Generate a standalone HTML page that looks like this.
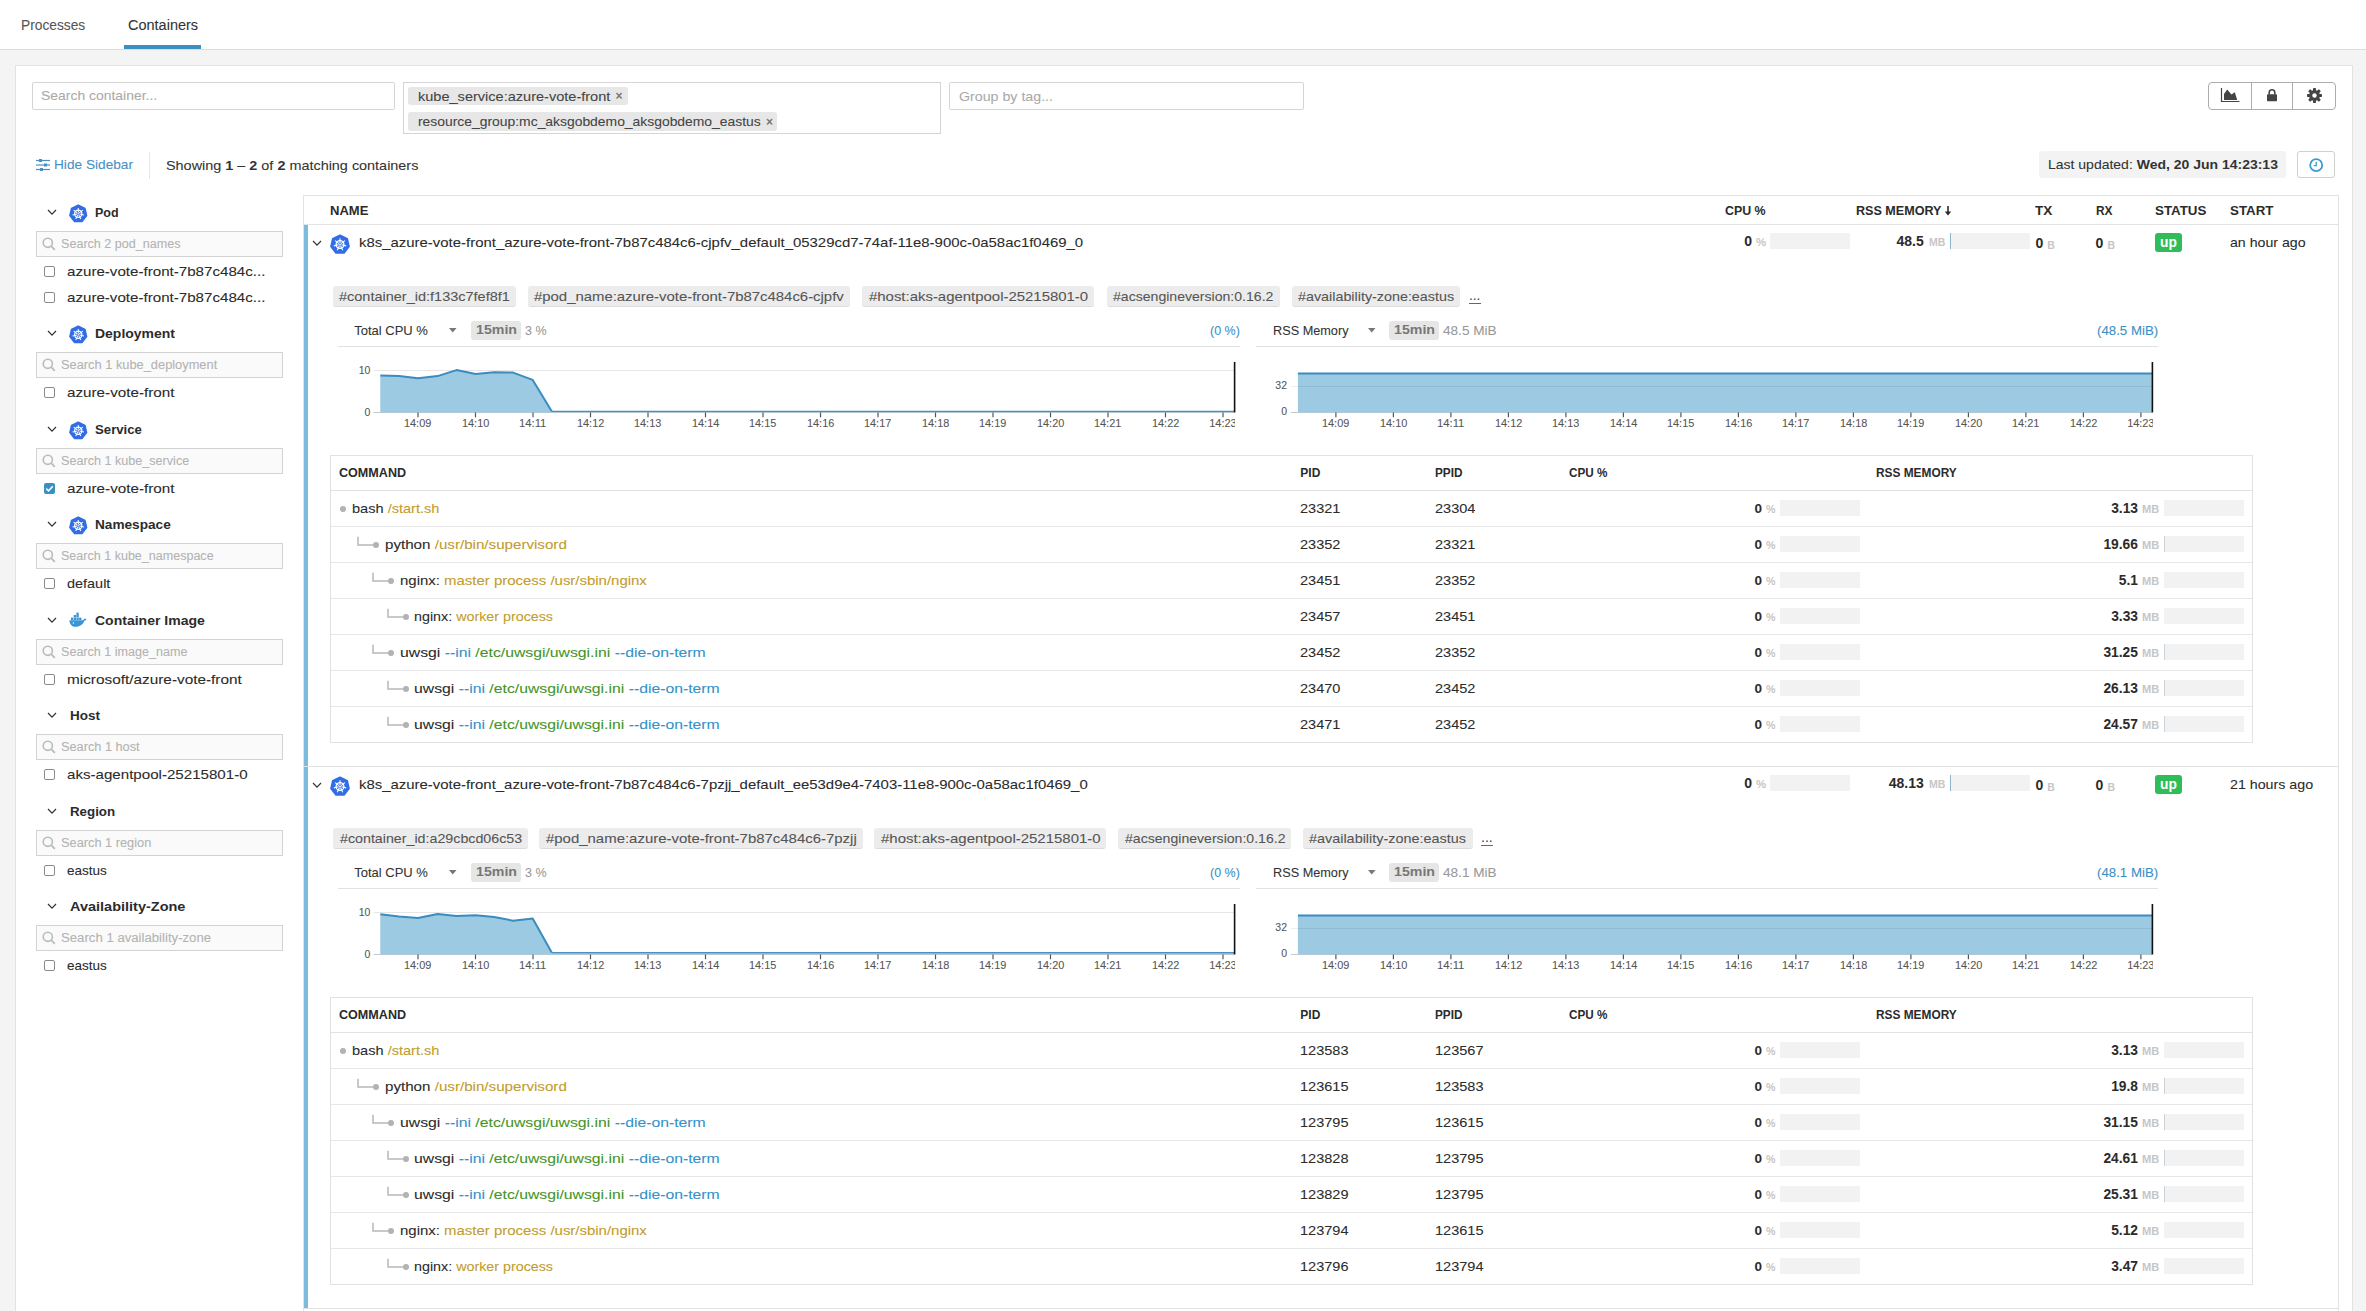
<!DOCTYPE html><html><head><meta charset="utf-8"><style>
html,body{margin:0;padding:0;}
body{width:2366px;height:1311px;overflow:hidden;position:relative;background:#f4f4f4;font-family:"Liberation Sans",sans-serif;}
.t{position:absolute;white-space:nowrap;line-height:1;-webkit-text-stroke:0.08px currentColor;}
.b{position:absolute;box-sizing:border-box;}
svg.b{overflow:visible}
</style></head><body>
<div class="b" style="left:0.00px;top:0.00px;width:2366.00px;height:49.00px;background:#fff"></div>
<div class="b" style="left:0.00px;top:49.00px;width:2366.00px;height:1.00px;background:#dcdcdc"></div>
<div class="t" style="left:20.60px;top:18.05px;font-size:14px;color:#555;transform:scaleX(0.9824);transform-origin:0 0;">Processes</div>
<div class="t" style="left:127.90px;top:18.05px;font-size:14px;color:#333;transform:scaleX(1.0355);transform-origin:0 0;">Containers</div>
<div class="b" style="left:124.00px;top:45.00px;width:77.00px;height:4.00px;background:#3c8fc1"></div>
<div class="b" style="left:15.00px;top:65.00px;width:2338.00px;height:1246.00px;background:#fff;border:1px solid #e3e3e3;border-bottom:none"></div>
<div class="b" style="left:32.00px;top:82.00px;width:363.00px;height:28.00px;border:1px solid #d5d5d5;border-radius:2px;background:#fff"></div>
<div class="t" style="left:41.10px;top:89.47px;font-size:13.5px;color:#aaa;transform:scaleX(1.0315);transform-origin:0 0;">Search container...</div>
<div class="b" style="left:403.00px;top:82.00px;width:538.00px;height:52.00px;border:1px solid #d5d5d5;background:#fff"></div>
<div class="b" style="left:408.00px;top:86.50px;width:220.00px;height:18.20px;background:#e7e7e7;border-radius:3px"></div>
<div class="t" style="left:418.30px;top:89.50px;font-size:13px;color:#444;transform:scaleX(1.1183);transform-origin:0 0;">kube_service:azure-vote-front</div>
<div class="t" style="left:615.60px;top:90.34px;font-size:12px;color:#777;font-weight:bold;-webkit-text-stroke:0;">×</div>
<div class="b" style="left:408.00px;top:112.30px;width:369.40px;height:18.30px;background:#e7e7e7;border-radius:3px"></div>
<div class="t" style="left:418.30px;top:115.40px;font-size:13px;color:#444;transform:scaleX(1.0681);transform-origin:0 0;">resource_group:mc_aksgobdemo_aksgobdemo_eastus</div>
<div class="t" style="left:766.00px;top:116.24px;font-size:12px;color:#777;font-weight:bold;-webkit-text-stroke:0;">×</div>
<div class="b" style="left:949.00px;top:82.00px;width:355.00px;height:28.00px;border:1px solid #d5d5d5;border-radius:2px;background:#fff"></div>
<div class="t" style="left:959.00px;top:89.87px;font-size:13.5px;color:#aaa;transform:scaleX(1.0526);transform-origin:0 0;">Group by tag...</div>
<div class="b" style="left:2208.00px;top:82.00px;width:128.00px;height:28.00px;border:1px solid #adadad;border-radius:4px;background:#fff"></div>
<div class="b" style="left:2250.50px;top:82.00px;width:1.00px;height:28.00px;background:#adadad"></div>
<div class="b" style="left:2292.30px;top:82.00px;width:1.00px;height:28.00px;background:#adadad"></div>
<svg class="b" style="left:2221px;top:88px" width="19" height="14" viewBox="0 0 19 14"><path d="M0.5 0 V13.5 H18.5" fill="none" stroke="#444" stroke-width="1.2"/><path d="M3 12 L3 6 L6.2 1.6 L10.5 6.4 L13.8 4.2 L16.2 12 Z" fill="#444"/></svg>
<svg class="b" style="left:2266.8px;top:88.6px" width="10" height="12.2" viewBox="0 0 10 12.2"><path d="M2.2 5.5 V3.6 A2.8 2.8 0 0 1 7.8 3.6 V5.5" fill="none" stroke="#444" stroke-width="1.6"/><rect x="0" y="5.3" width="10" height="6.9" rx="0.8" fill="#444"/></svg>
<svg class="b" style="left:2307px;top:88px" width="15" height="15" viewBox="-7.5 -7.5 15 15"><g fill="#444"><rect x="-1.45" y="-7.5" width="2.9" height="4" rx="0.6" transform="rotate(0)" /><rect x="-1.45" y="-7.5" width="2.9" height="4" rx="0.6" transform="rotate(45)" /><rect x="-1.45" y="-7.5" width="2.9" height="4" rx="0.6" transform="rotate(90)" /><rect x="-1.45" y="-7.5" width="2.9" height="4" rx="0.6" transform="rotate(135)" /><rect x="-1.45" y="-7.5" width="2.9" height="4" rx="0.6" transform="rotate(180)" /><rect x="-1.45" y="-7.5" width="2.9" height="4" rx="0.6" transform="rotate(225)" /><rect x="-1.45" y="-7.5" width="2.9" height="4" rx="0.6" transform="rotate(270)" /><rect x="-1.45" y="-7.5" width="2.9" height="4" rx="0.6" transform="rotate(315)" /><circle r="5.4"/></g><circle r="2.2" fill="#fff"/></svg>
<svg class="b" style="left:35.8px;top:159px" width="14" height="12" viewBox="0 0 14 12"><g stroke="#4a90c2" stroke-width="1.2"><line x1="0" y1="1.5" x2="14" y2="1.5"/><line x1="0" y1="6" x2="14" y2="6"/><line x1="0" y1="10.5" x2="14" y2="10.5"/></g><g fill="#4a90c2"><rect x="3" y="0" width="3" height="3"/><rect x="8" y="4.5" width="3" height="3"/><rect x="4" y="9" width="3" height="3"/></g></svg>
<div class="t" style="left:53.60px;top:158.27px;font-size:13.5px;color:#4a90c2;transform:scaleX(1.0122);transform-origin:0 0;">Hide Sidebar</div>
<div class="b" style="left:149.00px;top:152.40px;width:1.00px;height:26.60px;background:#e6e6e6"></div>
<div class="t" style="left:166.20px;top:158.60px;font-size:13px;transform:scaleX(1.1084);transform-origin:0 0;"><span style="color:#333;">Showing </span><span style="color:#333;font-weight:bold;-webkit-text-stroke:0;">1</span><span style="color:#333;"> – </span><span style="color:#333;font-weight:bold;-webkit-text-stroke:0;">2</span><span style="color:#333;"> of </span><span style="color:#333;font-weight:bold;-webkit-text-stroke:0;">2</span><span style="color:#333;"> matching containers</span></div>
<div class="b" style="left:2039.30px;top:151.00px;width:247.00px;height:27.00px;background:#f3f3f3;border-radius:3px"></div>
<div class="t" style="left:2048.00px;top:158.20px;font-size:13px;transform:scaleX(1.0761);transform-origin:0 0;"><span style="color:#333;">Last updated: </span><span style="color:#333;font-weight:bold;-webkit-text-stroke:0;">Wed, 20 Jun 14:23:13</span></div>
<div class="b" style="left:2297.30px;top:151.40px;width:38.00px;height:26.90px;border:1px solid #cfcfcf;border-radius:3px;background:#fff"></div>
<svg class="b" style="left:2309px;top:158px" width="15" height="15" viewBox="0 0 15 15"><circle cx="7.2" cy="7.2" r="6" fill="none" stroke="#3c9bd0" stroke-width="1.8"/><path d="M7.2 3.8 V7.6 H4.8" fill="none" stroke="#3c9bd0" stroke-width="1.3"/></svg>
<svg class="b" style="left:47px;top:208.8px" width="10" height="7" viewBox="0 0 10 7"><polyline points="1,1 5,5.2 9,1" fill="none" stroke="#333" stroke-width="1.2"/></svg>
<svg class="b" style="left:68.8px;top:204.1px" width="18.5" height="18.5" viewBox="0 0 20 20"><polygon points="10.00,1.20 17.27,4.70 19.07,12.57 14.04,18.88 5.96,18.88 0.93,12.57 2.73,4.70" fill="#326de6" stroke="#326de6" stroke-width="1.6" stroke-linejoin="round"/><g stroke="#fff" fill="none"><circle cx="10" cy="10.5" r="3.9" stroke-width="1.3"/><g stroke-width="1.1"><line x1="10.00" y1="9.10" x2="10.00" y2="4.20"/><line x1="11.09" y1="9.63" x2="14.93" y2="6.57"/><line x1="11.36" y1="10.81" x2="16.14" y2="11.90"/><line x1="10.61" y1="11.76" x2="12.73" y2="16.18"/><line x1="9.39" y1="11.76" x2="7.27" y2="16.18"/><line x1="8.64" y1="10.81" x2="3.86" y2="11.90"/><line x1="8.91" y1="9.63" x2="5.07" y2="6.57"/></g></g><circle cx="10" cy="10.5" r="0.9" fill="#fff"/></svg>
<div class="t" style="left:95.40px;top:206.00px;font-size:13px;color:#2b2b2b;font-weight:bold;-webkit-text-stroke:0;transform:scaleX(0.9613);transform-origin:0 0;">Pod</div>
<div class="b" style="left:36.00px;top:231.00px;width:247.00px;height:26.00px;border:1px solid #d3d3d3;background:#fafafa"></div>
<svg class="b" style="left:42px;top:237.2px" width="14" height="14" viewBox="0 0 14 14"><circle cx="5.8" cy="5.8" r="4.6" fill="none" stroke="#bbb" stroke-width="1.6"/><line x1="9.2" y1="9.2" x2="12.8" y2="12.8" stroke="#bbb" stroke-width="1.8"/></svg>
<div class="t" style="left:61.20px;top:238.04px;font-size:12px;color:#b3b3b3;transform:scaleX(1.0482);transform-origin:0 0;">Search 2 pod_names</div>
<div class="b" style="left:44.00px;top:265.60px;width:11.00px;height:11.00px;border:1px solid #8a8a8a;border-radius:2px;box-sizing:border-box;background:#fff"></div>
<div class="t" style="left:66.50px;top:265.20px;font-size:13px;color:#2b2b2b;transform:scaleX(1.1633);transform-origin:0 0;">azure-vote-front-7b87c484c...</div>
<div class="b" style="left:44.00px;top:291.60px;width:11.00px;height:11.00px;border:1px solid #8a8a8a;border-radius:2px;box-sizing:border-box;background:#fff"></div>
<div class="t" style="left:66.50px;top:291.20px;font-size:13px;color:#2b2b2b;transform:scaleX(1.1633);transform-origin:0 0;">azure-vote-front-7b87c484c...</div>
<svg class="b" style="left:47px;top:329.8px" width="10" height="7" viewBox="0 0 10 7"><polyline points="1,1 5,5.2 9,1" fill="none" stroke="#333" stroke-width="1.2"/></svg>
<svg class="b" style="left:68.8px;top:325.1px" width="18.5" height="18.5" viewBox="0 0 20 20"><polygon points="10.00,1.20 17.27,4.70 19.07,12.57 14.04,18.88 5.96,18.88 0.93,12.57 2.73,4.70" fill="#326de6" stroke="#326de6" stroke-width="1.6" stroke-linejoin="round"/><g stroke="#fff" fill="none"><circle cx="10" cy="10.5" r="3.9" stroke-width="1.3"/><g stroke-width="1.1"><line x1="10.00" y1="9.10" x2="10.00" y2="4.20"/><line x1="11.09" y1="9.63" x2="14.93" y2="6.57"/><line x1="11.36" y1="10.81" x2="16.14" y2="11.90"/><line x1="10.61" y1="11.76" x2="12.73" y2="16.18"/><line x1="9.39" y1="11.76" x2="7.27" y2="16.18"/><line x1="8.64" y1="10.81" x2="3.86" y2="11.90"/><line x1="8.91" y1="9.63" x2="5.07" y2="6.57"/></g></g><circle cx="10" cy="10.5" r="0.9" fill="#fff"/></svg>
<div class="t" style="left:95.40px;top:327.00px;font-size:13px;color:#2b2b2b;font-weight:bold;-webkit-text-stroke:0;transform:scaleX(1.0753);transform-origin:0 0;">Deployment</div>
<div class="b" style="left:36.00px;top:352.00px;width:247.00px;height:26.00px;border:1px solid #d3d3d3;background:#fafafa"></div>
<svg class="b" style="left:42px;top:358.2px" width="14" height="14" viewBox="0 0 14 14"><circle cx="5.8" cy="5.8" r="4.6" fill="none" stroke="#bbb" stroke-width="1.6"/><line x1="9.2" y1="9.2" x2="12.8" y2="12.8" stroke="#bbb" stroke-width="1.8"/></svg>
<div class="t" style="left:61.20px;top:359.04px;font-size:12px;color:#b3b3b3;transform:scaleX(1.0691);transform-origin:0 0;">Search 1 kube_deployment</div>
<div class="b" style="left:44.00px;top:386.60px;width:11.00px;height:11.00px;border:1px solid #8a8a8a;border-radius:2px;box-sizing:border-box;background:#fff"></div>
<div class="t" style="left:66.50px;top:386.20px;font-size:13px;color:#2b2b2b;transform:scaleX(1.1706);transform-origin:0 0;">azure-vote-front</div>
<svg class="b" style="left:47px;top:425.8px" width="10" height="7" viewBox="0 0 10 7"><polyline points="1,1 5,5.2 9,1" fill="none" stroke="#333" stroke-width="1.2"/></svg>
<svg class="b" style="left:68.8px;top:421.1px" width="18.5" height="18.5" viewBox="0 0 20 20"><polygon points="10.00,1.20 17.27,4.70 19.07,12.57 14.04,18.88 5.96,18.88 0.93,12.57 2.73,4.70" fill="#326de6" stroke="#326de6" stroke-width="1.6" stroke-linejoin="round"/><g stroke="#fff" fill="none"><circle cx="10" cy="10.5" r="3.9" stroke-width="1.3"/><g stroke-width="1.1"><line x1="10.00" y1="9.10" x2="10.00" y2="4.20"/><line x1="11.09" y1="9.63" x2="14.93" y2="6.57"/><line x1="11.36" y1="10.81" x2="16.14" y2="11.90"/><line x1="10.61" y1="11.76" x2="12.73" y2="16.18"/><line x1="9.39" y1="11.76" x2="7.27" y2="16.18"/><line x1="8.64" y1="10.81" x2="3.86" y2="11.90"/><line x1="8.91" y1="9.63" x2="5.07" y2="6.57"/></g></g><circle cx="10" cy="10.5" r="0.9" fill="#fff"/></svg>
<div class="t" style="left:95.40px;top:423.00px;font-size:13px;color:#2b2b2b;font-weight:bold;-webkit-text-stroke:0;transform:scaleX(1.0141);transform-origin:0 0;">Service</div>
<div class="b" style="left:36.00px;top:448.00px;width:247.00px;height:26.00px;border:1px solid #d3d3d3;background:#fafafa"></div>
<svg class="b" style="left:42px;top:454.2px" width="14" height="14" viewBox="0 0 14 14"><circle cx="5.8" cy="5.8" r="4.6" fill="none" stroke="#bbb" stroke-width="1.6"/><line x1="9.2" y1="9.2" x2="12.8" y2="12.8" stroke="#bbb" stroke-width="1.8"/></svg>
<div class="t" style="left:61.20px;top:455.04px;font-size:12px;color:#b3b3b3;transform:scaleX(1.0504);transform-origin:0 0;">Search 1 kube_service</div>
<svg class="b" style="left:44px;top:482.6px" width="11" height="11" viewBox="0 0 11 11"><rect x="0" y="0" width="11" height="11" rx="2" fill="#3c8fc1"/><polyline points="2.3,5.6 4.5,7.8 8.8,3.2" fill="none" stroke="#fff" stroke-width="1.6"/></svg>
<div class="t" style="left:66.50px;top:482.20px;font-size:13px;color:#2b2b2b;transform:scaleX(1.1706);transform-origin:0 0;">azure-vote-front</div>
<svg class="b" style="left:47px;top:520.8px" width="10" height="7" viewBox="0 0 10 7"><polyline points="1,1 5,5.2 9,1" fill="none" stroke="#333" stroke-width="1.2"/></svg>
<svg class="b" style="left:68.8px;top:516.1px" width="18.5" height="18.5" viewBox="0 0 20 20"><polygon points="10.00,1.20 17.27,4.70 19.07,12.57 14.04,18.88 5.96,18.88 0.93,12.57 2.73,4.70" fill="#326de6" stroke="#326de6" stroke-width="1.6" stroke-linejoin="round"/><g stroke="#fff" fill="none"><circle cx="10" cy="10.5" r="3.9" stroke-width="1.3"/><g stroke-width="1.1"><line x1="10.00" y1="9.10" x2="10.00" y2="4.20"/><line x1="11.09" y1="9.63" x2="14.93" y2="6.57"/><line x1="11.36" y1="10.81" x2="16.14" y2="11.90"/><line x1="10.61" y1="11.76" x2="12.73" y2="16.18"/><line x1="9.39" y1="11.76" x2="7.27" y2="16.18"/><line x1="8.64" y1="10.81" x2="3.86" y2="11.90"/><line x1="8.91" y1="9.63" x2="5.07" y2="6.57"/></g></g><circle cx="10" cy="10.5" r="0.9" fill="#fff"/></svg>
<div class="t" style="left:95.40px;top:518.00px;font-size:13px;color:#2b2b2b;font-weight:bold;-webkit-text-stroke:0;transform:scaleX(1.0478);transform-origin:0 0;">Namespace</div>
<div class="b" style="left:36.00px;top:543.00px;width:247.00px;height:26.00px;border:1px solid #d3d3d3;background:#fafafa"></div>
<svg class="b" style="left:42px;top:549.2px" width="14" height="14" viewBox="0 0 14 14"><circle cx="5.8" cy="5.8" r="4.6" fill="none" stroke="#bbb" stroke-width="1.6"/><line x1="9.2" y1="9.2" x2="12.8" y2="12.8" stroke="#bbb" stroke-width="1.8"/></svg>
<div class="t" style="left:61.20px;top:550.04px;font-size:12px;color:#b3b3b3;transform:scaleX(1.0445);transform-origin:0 0;">Search 1 kube_namespace</div>
<div class="b" style="left:44.00px;top:577.60px;width:11.00px;height:11.00px;border:1px solid #8a8a8a;border-radius:2px;box-sizing:border-box;background:#fff"></div>
<div class="t" style="left:66.50px;top:577.20px;font-size:13px;color:#2b2b2b;transform:scaleX(1.1114);transform-origin:0 0;">default</div>
<svg class="b" style="left:47px;top:616.8px" width="10" height="7" viewBox="0 0 10 7"><polyline points="1,1 5,5.2 9,1" fill="none" stroke="#333" stroke-width="1.2"/></svg>
<svg class="b" style="left:69px;top:614.4px" width="18" height="13" viewBox="0 0 18 13"><path d="M0.4 6.2 H14.2 C14.6 5.2 15.8 4.6 17.4 5.0 C17.0 6.0 16.4 6.6 15.4 6.8 C14.2 10.4 11.0 12.8 6.6 12.8 C2.8 12.8 0.6 10.2 0.4 6.2 Z" fill="#3a94d8"/><g fill="#3a94d8"><rect x="2.0" y="3.6" width="2.3" height="2.4"/><rect x="4.7" y="3.6" width="2.3" height="2.4"/><rect x="7.4" y="3.6" width="2.3" height="2.4"/><rect x="10.1" y="3.6" width="2.3" height="2.4"/><rect x="4.7" y="1.0" width="2.3" height="2.4"/><rect x="7.4" y="1.0" width="2.3" height="2.4"/><rect x="7.4" y="-1.4" width="2.3" height="2.4"/></g><circle cx="4.4" cy="9.0" r="0.7" fill="#fff"/></svg>
<div class="t" style="left:95.40px;top:614.00px;font-size:13px;color:#2b2b2b;font-weight:bold;-webkit-text-stroke:0;transform:scaleX(1.0781);transform-origin:0 0;">Container Image</div>
<div class="b" style="left:36.00px;top:639.00px;width:247.00px;height:26.00px;border:1px solid #d3d3d3;background:#fafafa"></div>
<svg class="b" style="left:42px;top:645.2px" width="14" height="14" viewBox="0 0 14 14"><circle cx="5.8" cy="5.8" r="4.6" fill="none" stroke="#bbb" stroke-width="1.6"/><line x1="9.2" y1="9.2" x2="12.8" y2="12.8" stroke="#bbb" stroke-width="1.8"/></svg>
<div class="t" style="left:61.20px;top:646.04px;font-size:12px;color:#b3b3b3;transform:scaleX(1.0476);transform-origin:0 0;">Search 1 image_name</div>
<div class="b" style="left:44.00px;top:673.60px;width:11.00px;height:11.00px;border:1px solid #8a8a8a;border-radius:2px;box-sizing:border-box;background:#fff"></div>
<div class="t" style="left:66.50px;top:673.20px;font-size:13px;color:#2b2b2b;transform:scaleX(1.1803);transform-origin:0 0;">microsoft/azure-vote-front</div>
<svg class="b" style="left:47px;top:711.8px" width="10" height="7" viewBox="0 0 10 7"><polyline points="1,1 5,5.2 9,1" fill="none" stroke="#333" stroke-width="1.2"/></svg>
<div class="t" style="left:69.60px;top:709.00px;font-size:13px;color:#2b2b2b;font-weight:bold;-webkit-text-stroke:0;transform:scaleX(1.0381);transform-origin:0 0;">Host</div>
<div class="b" style="left:36.00px;top:734.00px;width:247.00px;height:26.00px;border:1px solid #d3d3d3;background:#fafafa"></div>
<svg class="b" style="left:42px;top:740.2px" width="14" height="14" viewBox="0 0 14 14"><circle cx="5.8" cy="5.8" r="4.6" fill="none" stroke="#bbb" stroke-width="1.6"/><line x1="9.2" y1="9.2" x2="12.8" y2="12.8" stroke="#bbb" stroke-width="1.8"/></svg>
<div class="t" style="left:61.20px;top:741.04px;font-size:12px;color:#b3b3b3;transform:scaleX(1.0614);transform-origin:0 0;">Search 1 host</div>
<div class="b" style="left:44.00px;top:768.60px;width:11.00px;height:11.00px;border:1px solid #8a8a8a;border-radius:2px;box-sizing:border-box;background:#fff"></div>
<div class="t" style="left:66.50px;top:768.20px;font-size:13px;color:#2b2b2b;transform:scaleX(1.1622);transform-origin:0 0;">aks-agentpool-25215801-0</div>
<svg class="b" style="left:47px;top:807.8px" width="10" height="7" viewBox="0 0 10 7"><polyline points="1,1 5,5.2 9,1" fill="none" stroke="#333" stroke-width="1.2"/></svg>
<div class="t" style="left:69.60px;top:805.00px;font-size:13px;color:#2b2b2b;font-weight:bold;-webkit-text-stroke:0;transform:scaleX(1.0238);transform-origin:0 0;">Region</div>
<div class="b" style="left:36.00px;top:830.00px;width:247.00px;height:26.00px;border:1px solid #d3d3d3;background:#fafafa"></div>
<svg class="b" style="left:42px;top:836.2px" width="14" height="14" viewBox="0 0 14 14"><circle cx="5.8" cy="5.8" r="4.6" fill="none" stroke="#bbb" stroke-width="1.6"/><line x1="9.2" y1="9.2" x2="12.8" y2="12.8" stroke="#bbb" stroke-width="1.8"/></svg>
<div class="t" style="left:61.20px;top:837.04px;font-size:12px;color:#b3b3b3;transform:scaleX(1.0655);transform-origin:0 0;">Search 1 region</div>
<div class="b" style="left:44.00px;top:864.60px;width:11.00px;height:11.00px;border:1px solid #8a8a8a;border-radius:2px;box-sizing:border-box;background:#fff"></div>
<div class="t" style="left:66.50px;top:864.20px;font-size:13px;color:#2b2b2b;transform:scaleX(1.0392);transform-origin:0 0;">eastus</div>
<svg class="b" style="left:47px;top:902.8px" width="10" height="7" viewBox="0 0 10 7"><polyline points="1,1 5,5.2 9,1" fill="none" stroke="#333" stroke-width="1.2"/></svg>
<div class="t" style="left:69.60px;top:900.00px;font-size:13px;color:#2b2b2b;font-weight:bold;-webkit-text-stroke:0;transform:scaleX(1.1144);transform-origin:0 0;">Availability-Zone</div>
<div class="b" style="left:36.00px;top:925.00px;width:247.00px;height:26.00px;border:1px solid #d3d3d3;background:#fafafa"></div>
<svg class="b" style="left:42px;top:931.2px" width="14" height="14" viewBox="0 0 14 14"><circle cx="5.8" cy="5.8" r="4.6" fill="none" stroke="#bbb" stroke-width="1.6"/><line x1="9.2" y1="9.2" x2="12.8" y2="12.8" stroke="#bbb" stroke-width="1.8"/></svg>
<div class="t" style="left:61.20px;top:932.04px;font-size:12px;color:#b3b3b3;transform:scaleX(1.0976);transform-origin:0 0;">Search 1 availability-zone</div>
<div class="b" style="left:44.00px;top:959.60px;width:11.00px;height:11.00px;border:1px solid #8a8a8a;border-radius:2px;box-sizing:border-box;background:#fff"></div>
<div class="t" style="left:66.50px;top:959.20px;font-size:13px;color:#2b2b2b;transform:scaleX(1.0392);transform-origin:0 0;">eastus</div>
<div class="b" style="left:303.00px;top:195.00px;width:2036.00px;height:1116.00px;border:1px solid #e3e3e3;border-bottom:none;background:#fff"></div>
<div class="b" style="left:304.00px;top:224.00px;width:2034.00px;height:1.00px;background:#e3e3e3"></div>
<div class="t" style="left:330.40px;top:204.74px;font-size:12px;color:#2b2b2b;font-weight:bold;-webkit-text-stroke:0;transform:scaleX(1.0863);transform-origin:0 0;">NAME</div>
<div class="t" style="left:1725.40px;top:204.74px;font-size:12px;color:#2b2b2b;font-weight:bold;-webkit-text-stroke:0;transform:scaleX(1.0318);transform-origin:0 0;">CPU %</div>
<div class="t" style="left:1855.70px;top:204.74px;font-size:12px;color:#2b2b2b;font-weight:bold;-webkit-text-stroke:0;transform:scaleX(1.0484);transform-origin:0 0;">RSS MEMORY</div>
<svg class="b" style="left:1943.5px;top:205.5px" width="8" height="10" viewBox="0 0 8 10"><path d="M4 0 V8.5" stroke="#2b2b2b" stroke-width="1.6"/><path d="M0.8 5.6 L4 9.6 L7.2 5.6" fill="#2b2b2b"/></svg>
<div class="t" style="left:2035.20px;top:204.74px;font-size:12px;color:#2b2b2b;font-weight:bold;-webkit-text-stroke:0;transform:scaleX(1.1270);transform-origin:0 0;">TX</div>
<div class="t" style="left:2095.60px;top:204.74px;font-size:12px;color:#2b2b2b;font-weight:bold;-webkit-text-stroke:0;transform:scaleX(0.9910);transform-origin:0 0;">RX</div>
<div class="t" style="left:2155.20px;top:204.74px;font-size:12px;color:#2b2b2b;font-weight:bold;-webkit-text-stroke:0;transform:scaleX(1.1104);transform-origin:0 0;">STATUS</div>
<div class="t" style="left:2230.30px;top:204.74px;font-size:12px;color:#2b2b2b;font-weight:bold;-webkit-text-stroke:0;transform:scaleX(1.1100);transform-origin:0 0;">START</div>
<div class="b" style="left:304.00px;top:225.00px;width:4.00px;height:541.30px;background:#7dbbdd"></div>
<svg class="b" style="left:311.5px;top:239.5px" width="10" height="7" viewBox="0 0 10 7"><polyline points="1,1 5,5.2 9,1" fill="none" stroke="#333" stroke-width="1.2"/></svg>
<svg class="b" style="left:330px;top:234px" width="20" height="20" viewBox="0 0 20 20"><polygon points="10.00,1.20 17.27,4.70 19.07,12.57 14.04,18.88 5.96,18.88 0.93,12.57 2.73,4.70" fill="#326de6" stroke="#326de6" stroke-width="1.6" stroke-linejoin="round"/><g stroke="#fff" fill="none"><circle cx="10" cy="10.5" r="3.9" stroke-width="1.3"/><g stroke-width="1.1"><line x1="10.00" y1="9.10" x2="10.00" y2="4.20"/><line x1="11.09" y1="9.63" x2="14.93" y2="6.57"/><line x1="11.36" y1="10.81" x2="16.14" y2="11.90"/><line x1="10.61" y1="11.76" x2="12.73" y2="16.18"/><line x1="9.39" y1="11.76" x2="7.27" y2="16.18"/><line x1="8.64" y1="10.81" x2="3.86" y2="11.90"/><line x1="8.91" y1="9.63" x2="5.07" y2="6.57"/></g></g><circle cx="10" cy="10.5" r="0.9" fill="#fff"/></svg>
<div class="t" style="left:358.50px;top:236.47px;font-size:13.5px;color:#2b2b2b;transform:scaleX(1.1057);transform-origin:0 0;">k8s_azure-vote-front_azure-vote-front-7b87c484c6-cjpfv_default_05329cd7-74af-11e8-900c-0a58ac1f0469_0</div>
<div class="t" style="left:1744.20px;top:233.85px;font-size:14px;color:#2b2b2b;font-weight:bold;-webkit-text-stroke:0;">0</div>
<div class="t" style="left:1755.80px;top:236.81px;font-size:10.5px;color:#c6c6c6;font-weight:bold;-webkit-text-stroke:0;transform:scaleX(1.0909);transform-origin:0 0;">%</div>
<div class="b" style="left:1770.00px;top:233.00px;width:80.00px;height:16.00px;background:#f2f2f2"></div>
<div class="t" style="left:1896.55px;top:233.85px;font-size:14px;color:#2b2b2b;font-weight:bold;-webkit-text-stroke:0;">48.5</div>
<div class="t" style="left:1928.90px;top:236.81px;font-size:10.5px;color:#c6c6c6;font-weight:bold;-webkit-text-stroke:0;transform:scaleX(1.0031);transform-origin:0 0;">MB</div>
<div class="b" style="left:1950.20px;top:233.00px;width:79.80px;height:16.00px;background:#f2f2f2;border-left:1.5px solid #8fb4cf"></div>
<div class="t" style="left:2035.40px;top:236.35px;font-size:14px;color:#2b2b2b;font-weight:bold;-webkit-text-stroke:0;">0</div>
<div class="t" style="left:2047.20px;top:239.71px;font-size:10.5px;color:#c6c6c6;font-weight:bold;-webkit-text-stroke:0;">B</div>
<div class="t" style="left:2095.60px;top:236.35px;font-size:14px;color:#2b2b2b;font-weight:bold;-webkit-text-stroke:0;">0</div>
<div class="t" style="left:2107.40px;top:239.71px;font-size:10.5px;color:#c6c6c6;font-weight:bold;-webkit-text-stroke:0;">B</div>
<div class="b" style="left:2155.00px;top:233.00px;width:27.00px;height:19.00px;background:#2fbd5a;border-radius:3px"></div>
<div class="t" style="left:2160.20px;top:235.15px;font-size:14px;color:#fff;font-weight:bold;-webkit-text-stroke:0;transform:scaleX(0.9825);transform-origin:0 0;">up</div>
<div class="t" style="left:2230.40px;top:235.70px;font-size:13px;color:#2b2b2b;transform:scaleX(1.0879);transform-origin:0 0;">an hour ago</div>
<div class="b" style="left:332.80px;top:286.00px;width:183.40px;height:21.00px;background:#ececec;border-radius:3px;border-bottom:1px solid #dcdcdc"></div>
<div class="t" style="left:339.10px;top:289.70px;font-size:13px;color:#555;transform:scaleX(1.1149);transform-origin:0 0;">#container_id:f133c7fef8f1</div>
<div class="b" style="left:528.00px;top:286.00px;width:322.30px;height:21.00px;background:#ececec;border-radius:3px;border-bottom:1px solid #dcdcdc"></div>
<div class="t" style="left:534.30px;top:289.70px;font-size:13px;color:#555;transform:scaleX(1.1460);transform-origin:0 0;">#pod_name:azure-vote-front-7b87c484c6-cjpfv</div>
<div class="b" style="left:862.30px;top:286.00px;width:231.70px;height:21.00px;background:#ececec;border-radius:3px;border-bottom:1px solid #dcdcdc"></div>
<div class="t" style="left:868.60px;top:289.70px;font-size:13px;color:#555;transform:scaleX(1.1483);transform-origin:0 0;">#host:aks-agentpool-25215801-0</div>
<div class="b" style="left:1106.70px;top:286.00px;width:173.00px;height:21.00px;background:#ececec;border-radius:3px;border-bottom:1px solid #dcdcdc"></div>
<div class="t" style="left:1113.00px;top:289.70px;font-size:13px;color:#555;transform:scaleX(1.0827);transform-origin:0 0;">#acsengineversion:0.16.2</div>
<div class="b" style="left:1291.80px;top:286.00px;width:168.70px;height:21.00px;background:#ececec;border-radius:3px;border-bottom:1px solid #dcdcdc"></div>
<div class="t" style="left:1298.10px;top:289.70px;font-size:13px;color:#555;transform:scaleX(1.1020);transform-origin:0 0;">#availability-zone:eastus</div>
<div class="t" style="left:1469.40px;top:289.30px;font-size:13px;color:#444;transform:scaleX(1.0507);transform-origin:0 0;">...</div>
<div class="b" style="left:1469.40px;top:302.50px;width:11.40px;height:1.00px;background:#666"></div>
<div class="t" style="left:354.20px;top:323.50px;font-size:13px;color:#333;">Total CPU %</div>
<svg class="b" style="left:449.4px;top:328.4px" width="7.5" height="4.5" viewBox="0 0 7.5 4.5"><polygon points="0,0 7.5,0 3.75,4.5" fill="#777"/></svg>
<div class="b" style="left:471.00px;top:321.20px;width:49.70px;height:18.70px;background:#e6e6e6;border-radius:3px"></div>
<div class="t" style="left:475.50px;top:324.44px;font-size:12px;color:#777;font-weight:bold;-webkit-text-stroke:0;transform:scaleX(1.1816);transform-origin:0 0;">15min</div>
<div class="t" style="left:525.00px;top:323.60px;font-size:13px;color:#999;transform:scaleX(0.9598);transform-origin:0 0;">3 %</div>
<div class="t" style="left:1210.40px;top:323.60px;font-size:13px;color:#3a90c4;transform:scaleX(0.9597);transform-origin:0 0;">(0 %)</div>
<div class="b" style="left:338.00px;top:346.00px;width:902.20px;height:1.00px;background:#e2e2e2"></div>
<div class="t" style="left:1272.50px;top:323.50px;font-size:13px;color:#333;transform:scaleX(0.9767);transform-origin:0 0;">RSS Memory</div>
<svg class="b" style="left:1367.6px;top:328.4px" width="7.5" height="4.5" viewBox="0 0 7.5 4.5"><polygon points="0,0 7.5,0 3.75,4.5" fill="#777"/></svg>
<div class="b" style="left:1389.10px;top:321.20px;width:49.70px;height:18.70px;background:#e6e6e6;border-radius:3px"></div>
<div class="t" style="left:1393.60px;top:324.44px;font-size:12px;color:#777;font-weight:bold;-webkit-text-stroke:0;transform:scaleX(1.1816);transform-origin:0 0;">15min</div>
<div class="t" style="left:1443.10px;top:323.60px;font-size:13px;color:#999;transform:scaleX(1.0448);transform-origin:0 0;">48.5 MiB</div>
<div class="t" style="left:2096.60px;top:323.60px;font-size:13px;color:#3a90c4;transform:scaleX(1.0209);transform-origin:0 0;">(48.5 MiB)</div>
<div class="b" style="left:1256.00px;top:346.00px;width:901.80px;height:1.00px;background:#e2e2e2"></div>
<svg class="b" style="left:330px;top:355px" width="1850" height="80" viewBox="330 355 1850 80"><line x1="373.6" y1="370.5" x2="1234" y2="370.5" stroke="#e6e6e6" stroke-width="1"/><line x1="373.6" y1="412.5" x2="1234" y2="412.5" stroke="#c8c8c8" stroke-width="1"/><polygon points="380.3,412.5 380.3,375.4 399.0,376.0 418.0,378.3 437.6,376.1 456.4,370.1 475.7,373.9 494.1,372.3 513.1,372.6 532.7,379.9 551.7,411.3 1234.0,411.3 1234,412.5" fill="#9ccae2"/><polyline points="380.3,375.4 399.0,376.0 418.0,378.3 437.6,376.1 456.4,370.1 475.7,373.9 494.1,372.3 513.1,372.6 532.7,379.9 551.7,411.3" fill="none" stroke="#3a8cbf" stroke-width="2" stroke-linejoin="round"/><line x1="551.7" y1="411.3" x2="1234" y2="411.3" stroke="#4a90bd" stroke-width="1.3"/><line x1="1234.6" y1="362" x2="1234.6" y2="412.5" stroke="#111" stroke-width="1.6"/><line x1="1290.9" y1="412.5" x2="2152" y2="412.5" stroke="#c8c8c8" stroke-width="1"/><rect x="1297.9" y="373.4" width="854.0999999999999" height="39.10000000000002" fill="#9ccae2"/><line x1="1290.9" y1="386.5" x2="2152" y2="386.5" stroke="rgba(0,0,0,0.07)" stroke-width="1"/><line x1="1297.9" y1="373.6" x2="2152" y2="373.6" stroke="#3a8cbf" stroke-width="2"/><line x1="2152.4" y1="362" x2="2152.4" y2="412.5" stroke="#111" stroke-width="1.6"/><line x1="418.0" y1="412.5" x2="418.0" y2="417.3" stroke="#555" stroke-width="1.2"/><line x1="1335.9" y1="412.5" x2="1335.9" y2="417.3" stroke="#555" stroke-width="1.2"/><line x1="475.5" y1="412.5" x2="475.5" y2="417.3" stroke="#555" stroke-width="1.2"/><line x1="1393.4" y1="412.5" x2="1393.4" y2="417.3" stroke="#555" stroke-width="1.2"/><line x1="533.0" y1="412.5" x2="533.0" y2="417.3" stroke="#555" stroke-width="1.2"/><line x1="1450.9" y1="412.5" x2="1450.9" y2="417.3" stroke="#555" stroke-width="1.2"/><line x1="590.5" y1="412.5" x2="590.5" y2="417.3" stroke="#555" stroke-width="1.2"/><line x1="1508.4" y1="412.5" x2="1508.4" y2="417.3" stroke="#555" stroke-width="1.2"/><line x1="648.0" y1="412.5" x2="648.0" y2="417.3" stroke="#555" stroke-width="1.2"/><line x1="1565.9" y1="412.5" x2="1565.9" y2="417.3" stroke="#555" stroke-width="1.2"/><line x1="705.5" y1="412.5" x2="705.5" y2="417.3" stroke="#555" stroke-width="1.2"/><line x1="1623.4" y1="412.5" x2="1623.4" y2="417.3" stroke="#555" stroke-width="1.2"/><line x1="763.0" y1="412.5" x2="763.0" y2="417.3" stroke="#555" stroke-width="1.2"/><line x1="1680.9" y1="412.5" x2="1680.9" y2="417.3" stroke="#555" stroke-width="1.2"/><line x1="820.5" y1="412.5" x2="820.5" y2="417.3" stroke="#555" stroke-width="1.2"/><line x1="1738.4" y1="412.5" x2="1738.4" y2="417.3" stroke="#555" stroke-width="1.2"/><line x1="878.0" y1="412.5" x2="878.0" y2="417.3" stroke="#555" stroke-width="1.2"/><line x1="1795.9" y1="412.5" x2="1795.9" y2="417.3" stroke="#555" stroke-width="1.2"/><line x1="935.5" y1="412.5" x2="935.5" y2="417.3" stroke="#555" stroke-width="1.2"/><line x1="1853.4" y1="412.5" x2="1853.4" y2="417.3" stroke="#555" stroke-width="1.2"/><line x1="993.0" y1="412.5" x2="993.0" y2="417.3" stroke="#555" stroke-width="1.2"/><line x1="1910.9" y1="412.5" x2="1910.9" y2="417.3" stroke="#555" stroke-width="1.2"/><line x1="1050.5" y1="412.5" x2="1050.5" y2="417.3" stroke="#555" stroke-width="1.2"/><line x1="1968.4" y1="412.5" x2="1968.4" y2="417.3" stroke="#555" stroke-width="1.2"/><line x1="1108.0" y1="412.5" x2="1108.0" y2="417.3" stroke="#555" stroke-width="1.2"/><line x1="2025.9" y1="412.5" x2="2025.9" y2="417.3" stroke="#555" stroke-width="1.2"/><line x1="1165.5" y1="412.5" x2="1165.5" y2="417.3" stroke="#555" stroke-width="1.2"/><line x1="2083.4" y1="412.5" x2="2083.4" y2="417.3" stroke="#555" stroke-width="1.2"/><line x1="1223.0" y1="412.5" x2="1223.0" y2="417.3" stroke="#555" stroke-width="1.2"/><line x1="2140.9" y1="412.5" x2="2140.9" y2="417.3" stroke="#555" stroke-width="1.2"/></svg>
<div class="t" style="left:404.35px;top:417.59px;font-size:11px;color:#555;transform:scaleX(0.9909);transform-origin:0 0;">14:09</div>
<div class="t" style="left:1322.25px;top:417.59px;font-size:11px;color:#555;transform:scaleX(0.9909);transform-origin:0 0;">14:09</div>
<div class="t" style="left:461.85px;top:417.59px;font-size:11px;color:#555;transform:scaleX(0.9909);transform-origin:0 0;">14:10</div>
<div class="t" style="left:1379.75px;top:417.59px;font-size:11px;color:#555;transform:scaleX(0.9909);transform-origin:0 0;">14:10</div>
<div class="t" style="left:519.35px;top:417.59px;font-size:11px;color:#555;transform:scaleX(1.0225);transform-origin:0 0;">14:11</div>
<div class="t" style="left:1437.25px;top:417.59px;font-size:11px;color:#555;transform:scaleX(1.0225);transform-origin:0 0;">14:11</div>
<div class="t" style="left:576.85px;top:417.59px;font-size:11px;color:#555;transform:scaleX(0.9909);transform-origin:0 0;">14:12</div>
<div class="t" style="left:1494.75px;top:417.59px;font-size:11px;color:#555;transform:scaleX(0.9909);transform-origin:0 0;">14:12</div>
<div class="t" style="left:634.35px;top:417.59px;font-size:11px;color:#555;transform:scaleX(0.9909);transform-origin:0 0;">14:13</div>
<div class="t" style="left:1552.25px;top:417.59px;font-size:11px;color:#555;transform:scaleX(0.9909);transform-origin:0 0;">14:13</div>
<div class="t" style="left:691.85px;top:417.59px;font-size:11px;color:#555;transform:scaleX(0.9909);transform-origin:0 0;">14:14</div>
<div class="t" style="left:1609.75px;top:417.59px;font-size:11px;color:#555;transform:scaleX(0.9909);transform-origin:0 0;">14:14</div>
<div class="t" style="left:749.35px;top:417.59px;font-size:11px;color:#555;transform:scaleX(0.9909);transform-origin:0 0;">14:15</div>
<div class="t" style="left:1667.25px;top:417.59px;font-size:11px;color:#555;transform:scaleX(0.9909);transform-origin:0 0;">14:15</div>
<div class="t" style="left:806.85px;top:417.59px;font-size:11px;color:#555;transform:scaleX(0.9909);transform-origin:0 0;">14:16</div>
<div class="t" style="left:1724.75px;top:417.59px;font-size:11px;color:#555;transform:scaleX(0.9909);transform-origin:0 0;">14:16</div>
<div class="t" style="left:864.35px;top:417.59px;font-size:11px;color:#555;transform:scaleX(0.9909);transform-origin:0 0;">14:17</div>
<div class="t" style="left:1782.25px;top:417.59px;font-size:11px;color:#555;transform:scaleX(0.9909);transform-origin:0 0;">14:17</div>
<div class="t" style="left:921.85px;top:417.59px;font-size:11px;color:#555;transform:scaleX(0.9909);transform-origin:0 0;">14:18</div>
<div class="t" style="left:1839.75px;top:417.59px;font-size:11px;color:#555;transform:scaleX(0.9909);transform-origin:0 0;">14:18</div>
<div class="t" style="left:979.35px;top:417.59px;font-size:11px;color:#555;transform:scaleX(0.9909);transform-origin:0 0;">14:19</div>
<div class="t" style="left:1897.25px;top:417.59px;font-size:11px;color:#555;transform:scaleX(0.9909);transform-origin:0 0;">14:19</div>
<div class="t" style="left:1036.85px;top:417.59px;font-size:11px;color:#555;transform:scaleX(0.9909);transform-origin:0 0;">14:20</div>
<div class="t" style="left:1954.75px;top:417.59px;font-size:11px;color:#555;transform:scaleX(0.9909);transform-origin:0 0;">14:20</div>
<div class="t" style="left:1094.35px;top:417.59px;font-size:11px;color:#555;transform:scaleX(0.9909);transform-origin:0 0;">14:21</div>
<div class="t" style="left:2012.25px;top:417.59px;font-size:11px;color:#555;transform:scaleX(0.9909);transform-origin:0 0;">14:21</div>
<div class="t" style="left:1151.85px;top:417.59px;font-size:11px;color:#555;transform:scaleX(0.9909);transform-origin:0 0;">14:22</div>
<div class="t" style="left:2069.75px;top:417.59px;font-size:11px;color:#555;transform:scaleX(0.9909);transform-origin:0 0;">14:22</div>
<div class="t" style="left:1209.3px;top:417.59px;font-size:11px;color:#555;width:25.7px;overflow:hidden;letter-spacing:-0.057px">14:23</div>
<div class="t" style="left:2127.2px;top:417.59px;font-size:11px;color:#555;width:25.8px;overflow:hidden;letter-spacing:-0.057px">14:23</div>
<div class="t" style="left:358.70px;top:365.11px;font-size:10.5px;color:#555;">10</div>
<div class="t" style="left:364.55px;top:406.51px;font-size:10.5px;color:#555;">0</div>
<div class="t" style="left:1275.30px;top:380.01px;font-size:10.5px;color:#555;">32</div>
<div class="t" style="left:1281.15px;top:405.71px;font-size:10.5px;color:#555;">0</div>
<div class="b" style="left:330.00px;top:455.00px;width:1923.00px;height:288.00px;border:1px solid #e2e2e2"></div>
<div class="b" style="left:331.00px;top:490.00px;width:1921.00px;height:1.00px;background:#e2e2e2"></div>
<div class="t" style="left:339.40px;top:466.84px;font-size:12px;color:#2b2b2b;font-weight:bold;-webkit-text-stroke:0;transform:scaleX(1.0484);transform-origin:0 0;">COMMAND</div>
<div class="t" style="left:1300.30px;top:466.84px;font-size:12px;color:#2b2b2b;font-weight:bold;-webkit-text-stroke:0;">PID</div>
<div class="t" style="left:1435.40px;top:466.84px;font-size:12px;color:#2b2b2b;font-weight:bold;-webkit-text-stroke:0;transform:scaleX(0.9821);transform-origin:0 0;">PPID</div>
<div class="t" style="left:1568.70px;top:466.84px;font-size:12px;color:#2b2b2b;font-weight:bold;-webkit-text-stroke:0;transform:scaleX(0.9759);transform-origin:0 0;">CPU %</div>
<div class="t" style="left:1876.20px;top:466.84px;font-size:12px;color:#2b2b2b;font-weight:bold;-webkit-text-stroke:0;transform:scaleX(0.9896);transform-origin:0 0;">RSS MEMORY</div>
<div class="b" style="left:340.1px;top:506.1px;width:5.8px;height:5.8px;border-radius:50%;background:#b3b3b3"></div>
<div class="t" style="left:351.60px;top:501.70px;font-size:13px;transform:scaleX(1.1198);transform-origin:0 0;"><span style="color:#2b2b2b;">bash</span><span style="color:#2b2b2b;"> </span><span style="color:#c29c2c;">/start.sh</span></div>
<div class="t" style="left:1300.30px;top:501.70px;font-size:13px;color:#2b2b2b;transform:scaleX(1.1176);transform-origin:0 0;">23321</div>
<div class="t" style="left:1435.40px;top:501.70px;font-size:13px;color:#2b2b2b;transform:scaleX(1.1176);transform-origin:0 0;">23304</div>
<div class="t" style="left:1754.50px;top:501.77px;font-size:13.5px;color:#2b2b2b;font-weight:bold;-webkit-text-stroke:0;">0</div>
<div class="t" style="left:1766.00px;top:504.31px;font-size:10.5px;color:#c6c6c6;font-weight:bold;-webkit-text-stroke:0;transform:scaleX(1.0160);transform-origin:0 0;">%</div>
<div class="b" style="left:1780.00px;top:500.30px;width:80.00px;height:15.70px;background:#f2f2f2"></div>
<div class="t" style="left:2111.15px;top:501.52px;font-size:13.8px;color:#2b2b2b;font-weight:bold;-webkit-text-stroke:0;">3.13</div>
<div class="t" style="left:2142.00px;top:504.31px;font-size:10.5px;color:#c6c6c6;font-weight:bold;-webkit-text-stroke:0;transform:scaleX(1.0520);transform-origin:0 0;">MB</div>
<div class="b" style="left:2164.00px;top:500.30px;width:79.70px;height:15.70px;background:#f2f2f2"></div>
<div class="b" style="left:331.00px;top:526.30px;width:1921.00px;height:1.00px;background:#e6e6e6"></div>
<svg class="b" style="left:357.4px;top:536.3px" width="20" height="12" viewBox="0 0 20 12"><path d="M1 0.7 V8.9 H16.9" fill="none" stroke="#b8b8b8" stroke-width="1.5"/></svg>
<div class="b" style="left:373.4px;top:542.1px;width:5.8px;height:5.8px;border-radius:50%;background:#b3b3b3"></div>
<div class="t" style="left:385.00px;top:537.70px;font-size:13px;transform:scaleX(1.1647);transform-origin:0 0;"><span style="color:#2b2b2b;">python</span><span style="color:#2b2b2b;"> </span><span style="color:#c29c2c;">/usr/bin/supervisord</span></div>
<div class="t" style="left:1300.30px;top:537.70px;font-size:13px;color:#2b2b2b;transform:scaleX(1.1176);transform-origin:0 0;">23352</div>
<div class="t" style="left:1435.40px;top:537.70px;font-size:13px;color:#2b2b2b;transform:scaleX(1.1176);transform-origin:0 0;">23321</div>
<div class="t" style="left:1754.50px;top:537.77px;font-size:13.5px;color:#2b2b2b;font-weight:bold;-webkit-text-stroke:0;">0</div>
<div class="t" style="left:1766.00px;top:540.31px;font-size:10.5px;color:#c6c6c6;font-weight:bold;-webkit-text-stroke:0;transform:scaleX(1.0160);transform-origin:0 0;">%</div>
<div class="b" style="left:1780.00px;top:536.30px;width:80.00px;height:15.70px;background:#f2f2f2"></div>
<div class="t" style="left:2103.45px;top:537.52px;font-size:13.8px;color:#2b2b2b;font-weight:bold;-webkit-text-stroke:0;">19.66</div>
<div class="t" style="left:2142.00px;top:540.31px;font-size:10.5px;color:#c6c6c6;font-weight:bold;-webkit-text-stroke:0;transform:scaleX(1.0520);transform-origin:0 0;">MB</div>
<div class="b" style="left:2164.00px;top:536.30px;width:79.70px;height:15.70px;background:#f2f2f2;border-left:1px solid #c9d3d9"></div>
<div class="b" style="left:331.00px;top:562.30px;width:1921.00px;height:1.00px;background:#e6e6e6"></div>
<svg class="b" style="left:372.4px;top:572.3px" width="20" height="12" viewBox="0 0 20 12"><path d="M1 0.7 V8.9 H16.6" fill="none" stroke="#b8b8b8" stroke-width="1.5"/></svg>
<div class="b" style="left:388.1px;top:578.1px;width:5.8px;height:5.8px;border-radius:50%;background:#b3b3b3"></div>
<div class="t" style="left:399.70px;top:573.70px;font-size:13px;transform:scaleX(1.1500);transform-origin:0 0;"><span style="color:#2b2b2b;">nginx:</span><span style="color:#2b2b2b;"> </span><span style="color:#c29c2c;">master process /usr/sbin/nginx</span></div>
<div class="t" style="left:1300.30px;top:573.70px;font-size:13px;color:#2b2b2b;transform:scaleX(1.1176);transform-origin:0 0;">23451</div>
<div class="t" style="left:1435.40px;top:573.70px;font-size:13px;color:#2b2b2b;transform:scaleX(1.1176);transform-origin:0 0;">23352</div>
<div class="t" style="left:1754.50px;top:573.77px;font-size:13.5px;color:#2b2b2b;font-weight:bold;-webkit-text-stroke:0;">0</div>
<div class="t" style="left:1766.00px;top:576.31px;font-size:10.5px;color:#c6c6c6;font-weight:bold;-webkit-text-stroke:0;transform:scaleX(1.0160);transform-origin:0 0;">%</div>
<div class="b" style="left:1780.00px;top:572.30px;width:80.00px;height:15.70px;background:#f2f2f2"></div>
<div class="t" style="left:2118.80px;top:573.52px;font-size:13.8px;color:#2b2b2b;font-weight:bold;-webkit-text-stroke:0;">5.1</div>
<div class="t" style="left:2142.00px;top:576.31px;font-size:10.5px;color:#c6c6c6;font-weight:bold;-webkit-text-stroke:0;transform:scaleX(1.0520);transform-origin:0 0;">MB</div>
<div class="b" style="left:2164.00px;top:572.30px;width:79.70px;height:15.70px;background:#f2f2f2"></div>
<div class="b" style="left:331.00px;top:598.30px;width:1921.00px;height:1.00px;background:#e6e6e6"></div>
<svg class="b" style="left:387.4px;top:608.3px" width="20" height="12" viewBox="0 0 20 12"><path d="M1 0.7 V8.9 H16.3" fill="none" stroke="#b8b8b8" stroke-width="1.5"/></svg>
<div class="b" style="left:402.8px;top:614.1px;width:5.8px;height:5.8px;border-radius:50%;background:#b3b3b3"></div>
<div class="t" style="left:414.40px;top:609.70px;font-size:13px;transform:scaleX(1.0992);transform-origin:0 0;"><span style="color:#2b2b2b;">nginx:</span><span style="color:#2b2b2b;"> </span><span style="color:#c29c2c;">worker process</span></div>
<div class="t" style="left:1300.30px;top:609.70px;font-size:13px;color:#2b2b2b;transform:scaleX(1.1176);transform-origin:0 0;">23457</div>
<div class="t" style="left:1435.40px;top:609.70px;font-size:13px;color:#2b2b2b;transform:scaleX(1.1176);transform-origin:0 0;">23451</div>
<div class="t" style="left:1754.50px;top:609.77px;font-size:13.5px;color:#2b2b2b;font-weight:bold;-webkit-text-stroke:0;">0</div>
<div class="t" style="left:1766.00px;top:612.31px;font-size:10.5px;color:#c6c6c6;font-weight:bold;-webkit-text-stroke:0;transform:scaleX(1.0160);transform-origin:0 0;">%</div>
<div class="b" style="left:1780.00px;top:608.30px;width:80.00px;height:15.70px;background:#f2f2f2"></div>
<div class="t" style="left:2111.15px;top:609.52px;font-size:13.8px;color:#2b2b2b;font-weight:bold;-webkit-text-stroke:0;">3.33</div>
<div class="t" style="left:2142.00px;top:612.31px;font-size:10.5px;color:#c6c6c6;font-weight:bold;-webkit-text-stroke:0;transform:scaleX(1.0520);transform-origin:0 0;">MB</div>
<div class="b" style="left:2164.00px;top:608.30px;width:79.70px;height:15.70px;background:#f2f2f2"></div>
<div class="b" style="left:331.00px;top:634.30px;width:1921.00px;height:1.00px;background:#e6e6e6"></div>
<svg class="b" style="left:372.4px;top:644.3px" width="20" height="12" viewBox="0 0 20 12"><path d="M1 0.7 V8.9 H16.6" fill="none" stroke="#b8b8b8" stroke-width="1.5"/></svg>
<div class="b" style="left:388.1px;top:650.1px;width:5.8px;height:5.8px;border-radius:50%;background:#b3b3b3"></div>
<div class="t" style="left:399.70px;top:645.70px;font-size:13px;transform:scaleX(1.2122);transform-origin:0 0;"><span style="color:#2b2b2b;">uwsgi</span><span style="color:#2b2b2b;"> </span><span style="color:#3592c8;">--ini</span><span style="color:#2b2b2b;"> </span><span style="color:#459528;">/etc/uwsgi/uwsgi.ini</span><span style="color:#2b2b2b;"> </span><span style="color:#3592c8;">--die-on-term</span></div>
<div class="t" style="left:1300.30px;top:645.70px;font-size:13px;color:#2b2b2b;transform:scaleX(1.1176);transform-origin:0 0;">23452</div>
<div class="t" style="left:1435.40px;top:645.70px;font-size:13px;color:#2b2b2b;transform:scaleX(1.1176);transform-origin:0 0;">23352</div>
<div class="t" style="left:1754.50px;top:645.77px;font-size:13.5px;color:#2b2b2b;font-weight:bold;-webkit-text-stroke:0;">0</div>
<div class="t" style="left:1766.00px;top:648.31px;font-size:10.5px;color:#c6c6c6;font-weight:bold;-webkit-text-stroke:0;transform:scaleX(1.0160);transform-origin:0 0;">%</div>
<div class="b" style="left:1780.00px;top:644.30px;width:80.00px;height:15.70px;background:#f2f2f2"></div>
<div class="t" style="left:2103.45px;top:645.52px;font-size:13.8px;color:#2b2b2b;font-weight:bold;-webkit-text-stroke:0;">31.25</div>
<div class="t" style="left:2142.00px;top:648.31px;font-size:10.5px;color:#c6c6c6;font-weight:bold;-webkit-text-stroke:0;transform:scaleX(1.0520);transform-origin:0 0;">MB</div>
<div class="b" style="left:2164.00px;top:644.30px;width:79.70px;height:15.70px;background:#f2f2f2;border-left:1px solid #c9d3d9"></div>
<div class="b" style="left:331.00px;top:670.30px;width:1921.00px;height:1.00px;background:#e6e6e6"></div>
<svg class="b" style="left:387.4px;top:680.3px" width="20" height="12" viewBox="0 0 20 12"><path d="M1 0.7 V8.9 H16.3" fill="none" stroke="#b8b8b8" stroke-width="1.5"/></svg>
<div class="b" style="left:402.8px;top:686.1px;width:5.8px;height:5.8px;border-radius:50%;background:#b3b3b3"></div>
<div class="t" style="left:414.40px;top:681.70px;font-size:13px;transform:scaleX(1.2122);transform-origin:0 0;"><span style="color:#2b2b2b;">uwsgi</span><span style="color:#2b2b2b;"> </span><span style="color:#3592c8;">--ini</span><span style="color:#2b2b2b;"> </span><span style="color:#459528;">/etc/uwsgi/uwsgi.ini</span><span style="color:#2b2b2b;"> </span><span style="color:#3592c8;">--die-on-term</span></div>
<div class="t" style="left:1300.30px;top:681.70px;font-size:13px;color:#2b2b2b;transform:scaleX(1.1176);transform-origin:0 0;">23470</div>
<div class="t" style="left:1435.40px;top:681.70px;font-size:13px;color:#2b2b2b;transform:scaleX(1.1176);transform-origin:0 0;">23452</div>
<div class="t" style="left:1754.50px;top:681.77px;font-size:13.5px;color:#2b2b2b;font-weight:bold;-webkit-text-stroke:0;">0</div>
<div class="t" style="left:1766.00px;top:684.31px;font-size:10.5px;color:#c6c6c6;font-weight:bold;-webkit-text-stroke:0;transform:scaleX(1.0160);transform-origin:0 0;">%</div>
<div class="b" style="left:1780.00px;top:680.30px;width:80.00px;height:15.70px;background:#f2f2f2"></div>
<div class="t" style="left:2103.45px;top:681.52px;font-size:13.8px;color:#2b2b2b;font-weight:bold;-webkit-text-stroke:0;">26.13</div>
<div class="t" style="left:2142.00px;top:684.31px;font-size:10.5px;color:#c6c6c6;font-weight:bold;-webkit-text-stroke:0;transform:scaleX(1.0520);transform-origin:0 0;">MB</div>
<div class="b" style="left:2164.00px;top:680.30px;width:79.70px;height:15.70px;background:#f2f2f2;border-left:1px solid #c9d3d9"></div>
<div class="b" style="left:331.00px;top:706.30px;width:1921.00px;height:1.00px;background:#e6e6e6"></div>
<svg class="b" style="left:387.4px;top:716.3px" width="20" height="12" viewBox="0 0 20 12"><path d="M1 0.7 V8.9 H16.3" fill="none" stroke="#b8b8b8" stroke-width="1.5"/></svg>
<div class="b" style="left:402.8px;top:722.1px;width:5.8px;height:5.8px;border-radius:50%;background:#b3b3b3"></div>
<div class="t" style="left:414.40px;top:717.70px;font-size:13px;transform:scaleX(1.2122);transform-origin:0 0;"><span style="color:#2b2b2b;">uwsgi</span><span style="color:#2b2b2b;"> </span><span style="color:#3592c8;">--ini</span><span style="color:#2b2b2b;"> </span><span style="color:#459528;">/etc/uwsgi/uwsgi.ini</span><span style="color:#2b2b2b;"> </span><span style="color:#3592c8;">--die-on-term</span></div>
<div class="t" style="left:1300.30px;top:717.70px;font-size:13px;color:#2b2b2b;transform:scaleX(1.1176);transform-origin:0 0;">23471</div>
<div class="t" style="left:1435.40px;top:717.70px;font-size:13px;color:#2b2b2b;transform:scaleX(1.1176);transform-origin:0 0;">23452</div>
<div class="t" style="left:1754.50px;top:717.77px;font-size:13.5px;color:#2b2b2b;font-weight:bold;-webkit-text-stroke:0;">0</div>
<div class="t" style="left:1766.00px;top:720.31px;font-size:10.5px;color:#c6c6c6;font-weight:bold;-webkit-text-stroke:0;transform:scaleX(1.0160);transform-origin:0 0;">%</div>
<div class="b" style="left:1780.00px;top:716.30px;width:80.00px;height:15.70px;background:#f2f2f2"></div>
<div class="t" style="left:2103.45px;top:717.52px;font-size:13.8px;color:#2b2b2b;font-weight:bold;-webkit-text-stroke:0;">24.57</div>
<div class="t" style="left:2142.00px;top:720.31px;font-size:10.5px;color:#c6c6c6;font-weight:bold;-webkit-text-stroke:0;transform:scaleX(1.0520);transform-origin:0 0;">MB</div>
<div class="b" style="left:2164.00px;top:716.30px;width:79.70px;height:15.70px;background:#f2f2f2;border-left:1px solid #c9d3d9"></div>
<div class="b" style="left:304.00px;top:766.30px;width:2034.00px;height:1.00px;background:#e3e3e3"></div>
<div class="b" style="left:304.00px;top:767.00px;width:4.00px;height:540.60px;background:#7dbbdd"></div>
<svg class="b" style="left:311.5px;top:781.5px" width="10" height="7" viewBox="0 0 10 7"><polyline points="1,1 5,5.2 9,1" fill="none" stroke="#333" stroke-width="1.2"/></svg>
<svg class="b" style="left:330px;top:776px" width="20" height="20" viewBox="0 0 20 20"><polygon points="10.00,1.20 17.27,4.70 19.07,12.57 14.04,18.88 5.96,18.88 0.93,12.57 2.73,4.70" fill="#326de6" stroke="#326de6" stroke-width="1.6" stroke-linejoin="round"/><g stroke="#fff" fill="none"><circle cx="10" cy="10.5" r="3.9" stroke-width="1.3"/><g stroke-width="1.1"><line x1="10.00" y1="9.10" x2="10.00" y2="4.20"/><line x1="11.09" y1="9.63" x2="14.93" y2="6.57"/><line x1="11.36" y1="10.81" x2="16.14" y2="11.90"/><line x1="10.61" y1="11.76" x2="12.73" y2="16.18"/><line x1="9.39" y1="11.76" x2="7.27" y2="16.18"/><line x1="8.64" y1="10.81" x2="3.86" y2="11.90"/><line x1="8.91" y1="9.63" x2="5.07" y2="6.57"/></g></g><circle cx="10" cy="10.5" r="0.9" fill="#fff"/></svg>
<div class="t" style="left:358.50px;top:778.47px;font-size:13.5px;color:#2b2b2b;transform:scaleX(1.1050);transform-origin:0 0;">k8s_azure-vote-front_azure-vote-front-7b87c484c6-7pzjj_default_ee53d9e4-7403-11e8-900c-0a58ac1f0469_0</div>
<div class="t" style="left:1744.20px;top:775.85px;font-size:14px;color:#2b2b2b;font-weight:bold;-webkit-text-stroke:0;">0</div>
<div class="t" style="left:1755.80px;top:778.81px;font-size:10.5px;color:#c6c6c6;font-weight:bold;-webkit-text-stroke:0;transform:scaleX(1.0909);transform-origin:0 0;">%</div>
<div class="b" style="left:1770.00px;top:775.00px;width:80.00px;height:16.00px;background:#f2f2f2"></div>
<div class="t" style="left:1888.75px;top:775.85px;font-size:14px;color:#2b2b2b;font-weight:bold;-webkit-text-stroke:0;">48.13</div>
<div class="t" style="left:1928.90px;top:778.81px;font-size:10.5px;color:#c6c6c6;font-weight:bold;-webkit-text-stroke:0;transform:scaleX(1.0031);transform-origin:0 0;">MB</div>
<div class="b" style="left:1950.20px;top:775.00px;width:79.80px;height:16.00px;background:#f2f2f2;border-left:1.5px solid #8fb4cf"></div>
<div class="t" style="left:2035.40px;top:778.35px;font-size:14px;color:#2b2b2b;font-weight:bold;-webkit-text-stroke:0;">0</div>
<div class="t" style="left:2047.20px;top:781.71px;font-size:10.5px;color:#c6c6c6;font-weight:bold;-webkit-text-stroke:0;">B</div>
<div class="t" style="left:2095.60px;top:778.35px;font-size:14px;color:#2b2b2b;font-weight:bold;-webkit-text-stroke:0;">0</div>
<div class="t" style="left:2107.40px;top:781.71px;font-size:10.5px;color:#c6c6c6;font-weight:bold;-webkit-text-stroke:0;">B</div>
<div class="b" style="left:2155.00px;top:775.00px;width:27.00px;height:19.00px;background:#2fbd5a;border-radius:3px"></div>
<div class="t" style="left:2160.20px;top:777.15px;font-size:14px;color:#fff;font-weight:bold;-webkit-text-stroke:0;transform:scaleX(0.9825);transform-origin:0 0;">up</div>
<div class="t" style="left:2230.40px;top:777.70px;font-size:13px;color:#2b2b2b;transform:scaleX(1.0949);transform-origin:0 0;">21 hours ago</div>
<div class="b" style="left:333.20px;top:828.00px;width:194.80px;height:21.00px;background:#ececec;border-radius:3px;border-bottom:1px solid #dcdcdc"></div>
<div class="t" style="left:339.50px;top:831.70px;font-size:13px;color:#555;transform:scaleX(1.0959);transform-origin:0 0;">#container_id:a29cbcd06c53</div>
<div class="b" style="left:539.40px;top:828.00px;width:323.30px;height:21.00px;background:#ececec;border-radius:3px;border-bottom:1px solid #dcdcdc"></div>
<div class="t" style="left:545.70px;top:831.70px;font-size:13px;color:#555;transform:scaleX(1.1497);transform-origin:0 0;">#pod_name:azure-vote-front-7b87c484c6-7pzjj</div>
<div class="b" style="left:874.20px;top:828.00px;width:232.20px;height:21.00px;background:#ececec;border-radius:3px;border-bottom:1px solid #dcdcdc"></div>
<div class="t" style="left:880.50px;top:831.70px;font-size:13px;color:#555;transform:scaleX(1.1509);transform-origin:0 0;">#host:aks-agentpool-25215801-0</div>
<div class="b" style="left:1118.20px;top:828.00px;width:173.10px;height:21.00px;background:#ececec;border-radius:3px;border-bottom:1px solid #dcdcdc"></div>
<div class="t" style="left:1124.50px;top:831.70px;font-size:13px;color:#555;transform:scaleX(1.0834);transform-origin:0 0;">#acsengineversion:0.16.2</div>
<div class="b" style="left:1303.10px;top:828.00px;width:169.50px;height:21.00px;background:#ececec;border-radius:3px;border-bottom:1px solid #dcdcdc"></div>
<div class="t" style="left:1309.40px;top:831.70px;font-size:13px;color:#555;transform:scaleX(1.1077);transform-origin:0 0;">#availability-zone:eastus</div>
<div class="t" style="left:1481.40px;top:831.30px;font-size:13px;color:#444;transform:scaleX(1.0876);transform-origin:0 0;">...</div>
<div class="b" style="left:1481.40px;top:844.50px;width:11.80px;height:1.00px;background:#666"></div>
<div class="t" style="left:354.20px;top:865.50px;font-size:13px;color:#333;">Total CPU %</div>
<svg class="b" style="left:449.4px;top:870.4px" width="7.5" height="4.5" viewBox="0 0 7.5 4.5"><polygon points="0,0 7.5,0 3.75,4.5" fill="#777"/></svg>
<div class="b" style="left:471.00px;top:863.20px;width:49.70px;height:18.70px;background:#e6e6e6;border-radius:3px"></div>
<div class="t" style="left:475.50px;top:866.44px;font-size:12px;color:#777;font-weight:bold;-webkit-text-stroke:0;transform:scaleX(1.1816);transform-origin:0 0;">15min</div>
<div class="t" style="left:525.00px;top:865.60px;font-size:13px;color:#999;transform:scaleX(0.9598);transform-origin:0 0;">3 %</div>
<div class="t" style="left:1210.40px;top:865.60px;font-size:13px;color:#3a90c4;transform:scaleX(0.9597);transform-origin:0 0;">(0 %)</div>
<div class="b" style="left:338.00px;top:888.00px;width:902.20px;height:1.00px;background:#e2e2e2"></div>
<div class="t" style="left:1272.50px;top:865.50px;font-size:13px;color:#333;transform:scaleX(0.9767);transform-origin:0 0;">RSS Memory</div>
<svg class="b" style="left:1367.6px;top:870.4px" width="7.5" height="4.5" viewBox="0 0 7.5 4.5"><polygon points="0,0 7.5,0 3.75,4.5" fill="#777"/></svg>
<div class="b" style="left:1389.10px;top:863.20px;width:49.70px;height:18.70px;background:#e6e6e6;border-radius:3px"></div>
<div class="t" style="left:1393.60px;top:866.44px;font-size:12px;color:#777;font-weight:bold;-webkit-text-stroke:0;transform:scaleX(1.1816);transform-origin:0 0;">15min</div>
<div class="t" style="left:1443.10px;top:865.60px;font-size:13px;color:#999;transform:scaleX(1.0448);transform-origin:0 0;">48.1 MiB</div>
<div class="t" style="left:2096.60px;top:865.60px;font-size:13px;color:#3a90c4;transform:scaleX(1.0209);transform-origin:0 0;">(48.1 MiB)</div>
<div class="b" style="left:1256.00px;top:888.00px;width:901.80px;height:1.00px;background:#e2e2e2"></div>
<svg class="b" style="left:330px;top:897px" width="1850" height="80" viewBox="330 897 1850 80"><line x1="373.6" y1="912.5" x2="1234" y2="912.5" stroke="#e6e6e6" stroke-width="1"/><line x1="373.6" y1="954.5" x2="1234" y2="954.5" stroke="#c8c8c8" stroke-width="1"/><polygon points="380.3,954.5 380.3,914.3 399.0,916.5 418.0,918.1 437.6,913.9 456.4,916.1 475.7,915.2 494.1,916.9 513.1,920.7 532.7,918.4 551.7,952.6 1234.0,952.6 1234,954.5" fill="#9ccae2"/><polyline points="380.3,914.3 399.0,916.5 418.0,918.1 437.6,913.9 456.4,916.1 475.7,915.2 494.1,916.9 513.1,920.7 532.7,918.4 551.7,952.6" fill="none" stroke="#3a8cbf" stroke-width="2" stroke-linejoin="round"/><line x1="551.7" y1="952.6" x2="1234" y2="952.6" stroke="#4a90bd" stroke-width="1.3"/><line x1="1234.6" y1="904" x2="1234.6" y2="954.5" stroke="#111" stroke-width="1.6"/><line x1="1290.9" y1="954.5" x2="2152" y2="954.5" stroke="#c8c8c8" stroke-width="1"/><rect x="1297.9" y="915.4" width="854.0999999999999" height="39.10000000000002" fill="#9ccae2"/><line x1="1290.9" y1="928.5" x2="2152" y2="928.5" stroke="rgba(0,0,0,0.07)" stroke-width="1"/><line x1="1297.9" y1="915.6" x2="2152" y2="915.6" stroke="#3a8cbf" stroke-width="2"/><line x1="2152.4" y1="904" x2="2152.4" y2="954.5" stroke="#111" stroke-width="1.6"/><line x1="418.0" y1="954.5" x2="418.0" y2="959.3" stroke="#555" stroke-width="1.2"/><line x1="1335.9" y1="954.5" x2="1335.9" y2="959.3" stroke="#555" stroke-width="1.2"/><line x1="475.5" y1="954.5" x2="475.5" y2="959.3" stroke="#555" stroke-width="1.2"/><line x1="1393.4" y1="954.5" x2="1393.4" y2="959.3" stroke="#555" stroke-width="1.2"/><line x1="533.0" y1="954.5" x2="533.0" y2="959.3" stroke="#555" stroke-width="1.2"/><line x1="1450.9" y1="954.5" x2="1450.9" y2="959.3" stroke="#555" stroke-width="1.2"/><line x1="590.5" y1="954.5" x2="590.5" y2="959.3" stroke="#555" stroke-width="1.2"/><line x1="1508.4" y1="954.5" x2="1508.4" y2="959.3" stroke="#555" stroke-width="1.2"/><line x1="648.0" y1="954.5" x2="648.0" y2="959.3" stroke="#555" stroke-width="1.2"/><line x1="1565.9" y1="954.5" x2="1565.9" y2="959.3" stroke="#555" stroke-width="1.2"/><line x1="705.5" y1="954.5" x2="705.5" y2="959.3" stroke="#555" stroke-width="1.2"/><line x1="1623.4" y1="954.5" x2="1623.4" y2="959.3" stroke="#555" stroke-width="1.2"/><line x1="763.0" y1="954.5" x2="763.0" y2="959.3" stroke="#555" stroke-width="1.2"/><line x1="1680.9" y1="954.5" x2="1680.9" y2="959.3" stroke="#555" stroke-width="1.2"/><line x1="820.5" y1="954.5" x2="820.5" y2="959.3" stroke="#555" stroke-width="1.2"/><line x1="1738.4" y1="954.5" x2="1738.4" y2="959.3" stroke="#555" stroke-width="1.2"/><line x1="878.0" y1="954.5" x2="878.0" y2="959.3" stroke="#555" stroke-width="1.2"/><line x1="1795.9" y1="954.5" x2="1795.9" y2="959.3" stroke="#555" stroke-width="1.2"/><line x1="935.5" y1="954.5" x2="935.5" y2="959.3" stroke="#555" stroke-width="1.2"/><line x1="1853.4" y1="954.5" x2="1853.4" y2="959.3" stroke="#555" stroke-width="1.2"/><line x1="993.0" y1="954.5" x2="993.0" y2="959.3" stroke="#555" stroke-width="1.2"/><line x1="1910.9" y1="954.5" x2="1910.9" y2="959.3" stroke="#555" stroke-width="1.2"/><line x1="1050.5" y1="954.5" x2="1050.5" y2="959.3" stroke="#555" stroke-width="1.2"/><line x1="1968.4" y1="954.5" x2="1968.4" y2="959.3" stroke="#555" stroke-width="1.2"/><line x1="1108.0" y1="954.5" x2="1108.0" y2="959.3" stroke="#555" stroke-width="1.2"/><line x1="2025.9" y1="954.5" x2="2025.9" y2="959.3" stroke="#555" stroke-width="1.2"/><line x1="1165.5" y1="954.5" x2="1165.5" y2="959.3" stroke="#555" stroke-width="1.2"/><line x1="2083.4" y1="954.5" x2="2083.4" y2="959.3" stroke="#555" stroke-width="1.2"/><line x1="1223.0" y1="954.5" x2="1223.0" y2="959.3" stroke="#555" stroke-width="1.2"/><line x1="2140.9" y1="954.5" x2="2140.9" y2="959.3" stroke="#555" stroke-width="1.2"/></svg>
<div class="t" style="left:404.35px;top:959.59px;font-size:11px;color:#555;transform:scaleX(0.9909);transform-origin:0 0;">14:09</div>
<div class="t" style="left:1322.25px;top:959.59px;font-size:11px;color:#555;transform:scaleX(0.9909);transform-origin:0 0;">14:09</div>
<div class="t" style="left:461.85px;top:959.59px;font-size:11px;color:#555;transform:scaleX(0.9909);transform-origin:0 0;">14:10</div>
<div class="t" style="left:1379.75px;top:959.59px;font-size:11px;color:#555;transform:scaleX(0.9909);transform-origin:0 0;">14:10</div>
<div class="t" style="left:519.35px;top:959.59px;font-size:11px;color:#555;transform:scaleX(1.0225);transform-origin:0 0;">14:11</div>
<div class="t" style="left:1437.25px;top:959.59px;font-size:11px;color:#555;transform:scaleX(1.0225);transform-origin:0 0;">14:11</div>
<div class="t" style="left:576.85px;top:959.59px;font-size:11px;color:#555;transform:scaleX(0.9909);transform-origin:0 0;">14:12</div>
<div class="t" style="left:1494.75px;top:959.59px;font-size:11px;color:#555;transform:scaleX(0.9909);transform-origin:0 0;">14:12</div>
<div class="t" style="left:634.35px;top:959.59px;font-size:11px;color:#555;transform:scaleX(0.9909);transform-origin:0 0;">14:13</div>
<div class="t" style="left:1552.25px;top:959.59px;font-size:11px;color:#555;transform:scaleX(0.9909);transform-origin:0 0;">14:13</div>
<div class="t" style="left:691.85px;top:959.59px;font-size:11px;color:#555;transform:scaleX(0.9909);transform-origin:0 0;">14:14</div>
<div class="t" style="left:1609.75px;top:959.59px;font-size:11px;color:#555;transform:scaleX(0.9909);transform-origin:0 0;">14:14</div>
<div class="t" style="left:749.35px;top:959.59px;font-size:11px;color:#555;transform:scaleX(0.9909);transform-origin:0 0;">14:15</div>
<div class="t" style="left:1667.25px;top:959.59px;font-size:11px;color:#555;transform:scaleX(0.9909);transform-origin:0 0;">14:15</div>
<div class="t" style="left:806.85px;top:959.59px;font-size:11px;color:#555;transform:scaleX(0.9909);transform-origin:0 0;">14:16</div>
<div class="t" style="left:1724.75px;top:959.59px;font-size:11px;color:#555;transform:scaleX(0.9909);transform-origin:0 0;">14:16</div>
<div class="t" style="left:864.35px;top:959.59px;font-size:11px;color:#555;transform:scaleX(0.9909);transform-origin:0 0;">14:17</div>
<div class="t" style="left:1782.25px;top:959.59px;font-size:11px;color:#555;transform:scaleX(0.9909);transform-origin:0 0;">14:17</div>
<div class="t" style="left:921.85px;top:959.59px;font-size:11px;color:#555;transform:scaleX(0.9909);transform-origin:0 0;">14:18</div>
<div class="t" style="left:1839.75px;top:959.59px;font-size:11px;color:#555;transform:scaleX(0.9909);transform-origin:0 0;">14:18</div>
<div class="t" style="left:979.35px;top:959.59px;font-size:11px;color:#555;transform:scaleX(0.9909);transform-origin:0 0;">14:19</div>
<div class="t" style="left:1897.25px;top:959.59px;font-size:11px;color:#555;transform:scaleX(0.9909);transform-origin:0 0;">14:19</div>
<div class="t" style="left:1036.85px;top:959.59px;font-size:11px;color:#555;transform:scaleX(0.9909);transform-origin:0 0;">14:20</div>
<div class="t" style="left:1954.75px;top:959.59px;font-size:11px;color:#555;transform:scaleX(0.9909);transform-origin:0 0;">14:20</div>
<div class="t" style="left:1094.35px;top:959.59px;font-size:11px;color:#555;transform:scaleX(0.9909);transform-origin:0 0;">14:21</div>
<div class="t" style="left:2012.25px;top:959.59px;font-size:11px;color:#555;transform:scaleX(0.9909);transform-origin:0 0;">14:21</div>
<div class="t" style="left:1151.85px;top:959.59px;font-size:11px;color:#555;transform:scaleX(0.9909);transform-origin:0 0;">14:22</div>
<div class="t" style="left:2069.75px;top:959.59px;font-size:11px;color:#555;transform:scaleX(0.9909);transform-origin:0 0;">14:22</div>
<div class="t" style="left:1209.3px;top:959.59px;font-size:11px;color:#555;width:25.7px;overflow:hidden;letter-spacing:-0.057px">14:23</div>
<div class="t" style="left:2127.2px;top:959.59px;font-size:11px;color:#555;width:25.8px;overflow:hidden;letter-spacing:-0.057px">14:23</div>
<div class="t" style="left:358.70px;top:907.11px;font-size:10.5px;color:#555;">10</div>
<div class="t" style="left:364.55px;top:948.51px;font-size:10.5px;color:#555;">0</div>
<div class="t" style="left:1275.30px;top:922.01px;font-size:10.5px;color:#555;">32</div>
<div class="t" style="left:1281.15px;top:947.71px;font-size:10.5px;color:#555;">0</div>
<div class="b" style="left:330.00px;top:997.00px;width:1923.00px;height:288.00px;border:1px solid #e2e2e2"></div>
<div class="b" style="left:331.00px;top:1032.00px;width:1921.00px;height:1.00px;background:#e2e2e2"></div>
<div class="t" style="left:339.40px;top:1008.84px;font-size:12px;color:#2b2b2b;font-weight:bold;-webkit-text-stroke:0;transform:scaleX(1.0484);transform-origin:0 0;">COMMAND</div>
<div class="t" style="left:1300.30px;top:1008.84px;font-size:12px;color:#2b2b2b;font-weight:bold;-webkit-text-stroke:0;">PID</div>
<div class="t" style="left:1435.40px;top:1008.84px;font-size:12px;color:#2b2b2b;font-weight:bold;-webkit-text-stroke:0;transform:scaleX(0.9821);transform-origin:0 0;">PPID</div>
<div class="t" style="left:1568.70px;top:1008.84px;font-size:12px;color:#2b2b2b;font-weight:bold;-webkit-text-stroke:0;transform:scaleX(0.9759);transform-origin:0 0;">CPU %</div>
<div class="t" style="left:1876.20px;top:1008.84px;font-size:12px;color:#2b2b2b;font-weight:bold;-webkit-text-stroke:0;transform:scaleX(0.9896);transform-origin:0 0;">RSS MEMORY</div>
<div class="b" style="left:340.1px;top:1048.1px;width:5.8px;height:5.8px;border-radius:50%;background:#b3b3b3"></div>
<div class="t" style="left:351.60px;top:1043.70px;font-size:13px;transform:scaleX(1.1198);transform-origin:0 0;"><span style="color:#2b2b2b;">bash</span><span style="color:#2b2b2b;"> </span><span style="color:#c29c2c;">/start.sh</span></div>
<div class="t" style="left:1300.30px;top:1043.70px;font-size:13px;color:#2b2b2b;transform:scaleX(1.1171);transform-origin:0 0;">123583</div>
<div class="t" style="left:1435.40px;top:1043.70px;font-size:13px;color:#2b2b2b;transform:scaleX(1.1171);transform-origin:0 0;">123567</div>
<div class="t" style="left:1754.50px;top:1043.77px;font-size:13.5px;color:#2b2b2b;font-weight:bold;-webkit-text-stroke:0;">0</div>
<div class="t" style="left:1766.00px;top:1046.31px;font-size:10.5px;color:#c6c6c6;font-weight:bold;-webkit-text-stroke:0;transform:scaleX(1.0160);transform-origin:0 0;">%</div>
<div class="b" style="left:1780.00px;top:1042.30px;width:80.00px;height:15.70px;background:#f2f2f2"></div>
<div class="t" style="left:2111.15px;top:1043.52px;font-size:13.8px;color:#2b2b2b;font-weight:bold;-webkit-text-stroke:0;">3.13</div>
<div class="t" style="left:2142.00px;top:1046.31px;font-size:10.5px;color:#c6c6c6;font-weight:bold;-webkit-text-stroke:0;transform:scaleX(1.0520);transform-origin:0 0;">MB</div>
<div class="b" style="left:2164.00px;top:1042.30px;width:79.70px;height:15.70px;background:#f2f2f2"></div>
<div class="b" style="left:331.00px;top:1068.30px;width:1921.00px;height:1.00px;background:#e6e6e6"></div>
<svg class="b" style="left:357.4px;top:1078.3px" width="20" height="12" viewBox="0 0 20 12"><path d="M1 0.7 V8.9 H16.9" fill="none" stroke="#b8b8b8" stroke-width="1.5"/></svg>
<div class="b" style="left:373.4px;top:1084.1px;width:5.8px;height:5.8px;border-radius:50%;background:#b3b3b3"></div>
<div class="t" style="left:385.00px;top:1079.70px;font-size:13px;transform:scaleX(1.1647);transform-origin:0 0;"><span style="color:#2b2b2b;">python</span><span style="color:#2b2b2b;"> </span><span style="color:#c29c2c;">/usr/bin/supervisord</span></div>
<div class="t" style="left:1300.30px;top:1079.70px;font-size:13px;color:#2b2b2b;transform:scaleX(1.1171);transform-origin:0 0;">123615</div>
<div class="t" style="left:1435.40px;top:1079.70px;font-size:13px;color:#2b2b2b;transform:scaleX(1.1171);transform-origin:0 0;">123583</div>
<div class="t" style="left:1754.50px;top:1079.77px;font-size:13.5px;color:#2b2b2b;font-weight:bold;-webkit-text-stroke:0;">0</div>
<div class="t" style="left:1766.00px;top:1082.31px;font-size:10.5px;color:#c6c6c6;font-weight:bold;-webkit-text-stroke:0;transform:scaleX(1.0160);transform-origin:0 0;">%</div>
<div class="b" style="left:1780.00px;top:1078.30px;width:80.00px;height:15.70px;background:#f2f2f2"></div>
<div class="t" style="left:2111.15px;top:1079.52px;font-size:13.8px;color:#2b2b2b;font-weight:bold;-webkit-text-stroke:0;">19.8</div>
<div class="t" style="left:2142.00px;top:1082.31px;font-size:10.5px;color:#c6c6c6;font-weight:bold;-webkit-text-stroke:0;transform:scaleX(1.0520);transform-origin:0 0;">MB</div>
<div class="b" style="left:2164.00px;top:1078.30px;width:79.70px;height:15.70px;background:#f2f2f2;border-left:1px solid #c9d3d9"></div>
<div class="b" style="left:331.00px;top:1104.30px;width:1921.00px;height:1.00px;background:#e6e6e6"></div>
<svg class="b" style="left:372.4px;top:1114.3px" width="20" height="12" viewBox="0 0 20 12"><path d="M1 0.7 V8.9 H16.6" fill="none" stroke="#b8b8b8" stroke-width="1.5"/></svg>
<div class="b" style="left:388.1px;top:1120.1px;width:5.8px;height:5.8px;border-radius:50%;background:#b3b3b3"></div>
<div class="t" style="left:399.70px;top:1115.70px;font-size:13px;transform:scaleX(1.2122);transform-origin:0 0;"><span style="color:#2b2b2b;">uwsgi</span><span style="color:#2b2b2b;"> </span><span style="color:#3592c8;">--ini</span><span style="color:#2b2b2b;"> </span><span style="color:#459528;">/etc/uwsgi/uwsgi.ini</span><span style="color:#2b2b2b;"> </span><span style="color:#3592c8;">--die-on-term</span></div>
<div class="t" style="left:1300.30px;top:1115.70px;font-size:13px;color:#2b2b2b;transform:scaleX(1.1171);transform-origin:0 0;">123795</div>
<div class="t" style="left:1435.40px;top:1115.70px;font-size:13px;color:#2b2b2b;transform:scaleX(1.1171);transform-origin:0 0;">123615</div>
<div class="t" style="left:1754.50px;top:1115.77px;font-size:13.5px;color:#2b2b2b;font-weight:bold;-webkit-text-stroke:0;">0</div>
<div class="t" style="left:1766.00px;top:1118.31px;font-size:10.5px;color:#c6c6c6;font-weight:bold;-webkit-text-stroke:0;transform:scaleX(1.0160);transform-origin:0 0;">%</div>
<div class="b" style="left:1780.00px;top:1114.30px;width:80.00px;height:15.70px;background:#f2f2f2"></div>
<div class="t" style="left:2103.45px;top:1115.52px;font-size:13.8px;color:#2b2b2b;font-weight:bold;-webkit-text-stroke:0;">31.15</div>
<div class="t" style="left:2142.00px;top:1118.31px;font-size:10.5px;color:#c6c6c6;font-weight:bold;-webkit-text-stroke:0;transform:scaleX(1.0520);transform-origin:0 0;">MB</div>
<div class="b" style="left:2164.00px;top:1114.30px;width:79.70px;height:15.70px;background:#f2f2f2;border-left:1px solid #c9d3d9"></div>
<div class="b" style="left:331.00px;top:1140.30px;width:1921.00px;height:1.00px;background:#e6e6e6"></div>
<svg class="b" style="left:387.4px;top:1150.3px" width="20" height="12" viewBox="0 0 20 12"><path d="M1 0.7 V8.9 H16.3" fill="none" stroke="#b8b8b8" stroke-width="1.5"/></svg>
<div class="b" style="left:402.8px;top:1156.1px;width:5.8px;height:5.8px;border-radius:50%;background:#b3b3b3"></div>
<div class="t" style="left:414.40px;top:1151.70px;font-size:13px;transform:scaleX(1.2122);transform-origin:0 0;"><span style="color:#2b2b2b;">uwsgi</span><span style="color:#2b2b2b;"> </span><span style="color:#3592c8;">--ini</span><span style="color:#2b2b2b;"> </span><span style="color:#459528;">/etc/uwsgi/uwsgi.ini</span><span style="color:#2b2b2b;"> </span><span style="color:#3592c8;">--die-on-term</span></div>
<div class="t" style="left:1300.30px;top:1151.70px;font-size:13px;color:#2b2b2b;transform:scaleX(1.1171);transform-origin:0 0;">123828</div>
<div class="t" style="left:1435.40px;top:1151.70px;font-size:13px;color:#2b2b2b;transform:scaleX(1.1171);transform-origin:0 0;">123795</div>
<div class="t" style="left:1754.50px;top:1151.77px;font-size:13.5px;color:#2b2b2b;font-weight:bold;-webkit-text-stroke:0;">0</div>
<div class="t" style="left:1766.00px;top:1154.31px;font-size:10.5px;color:#c6c6c6;font-weight:bold;-webkit-text-stroke:0;transform:scaleX(1.0160);transform-origin:0 0;">%</div>
<div class="b" style="left:1780.00px;top:1150.30px;width:80.00px;height:15.70px;background:#f2f2f2"></div>
<div class="t" style="left:2103.45px;top:1151.52px;font-size:13.8px;color:#2b2b2b;font-weight:bold;-webkit-text-stroke:0;">24.61</div>
<div class="t" style="left:2142.00px;top:1154.31px;font-size:10.5px;color:#c6c6c6;font-weight:bold;-webkit-text-stroke:0;transform:scaleX(1.0520);transform-origin:0 0;">MB</div>
<div class="b" style="left:2164.00px;top:1150.30px;width:79.70px;height:15.70px;background:#f2f2f2;border-left:1px solid #c9d3d9"></div>
<div class="b" style="left:331.00px;top:1176.30px;width:1921.00px;height:1.00px;background:#e6e6e6"></div>
<svg class="b" style="left:387.4px;top:1186.3px" width="20" height="12" viewBox="0 0 20 12"><path d="M1 0.7 V8.9 H16.3" fill="none" stroke="#b8b8b8" stroke-width="1.5"/></svg>
<div class="b" style="left:402.8px;top:1192.1px;width:5.8px;height:5.8px;border-radius:50%;background:#b3b3b3"></div>
<div class="t" style="left:414.40px;top:1187.70px;font-size:13px;transform:scaleX(1.2122);transform-origin:0 0;"><span style="color:#2b2b2b;">uwsgi</span><span style="color:#2b2b2b;"> </span><span style="color:#3592c8;">--ini</span><span style="color:#2b2b2b;"> </span><span style="color:#459528;">/etc/uwsgi/uwsgi.ini</span><span style="color:#2b2b2b;"> </span><span style="color:#3592c8;">--die-on-term</span></div>
<div class="t" style="left:1300.30px;top:1187.70px;font-size:13px;color:#2b2b2b;transform:scaleX(1.1171);transform-origin:0 0;">123829</div>
<div class="t" style="left:1435.40px;top:1187.70px;font-size:13px;color:#2b2b2b;transform:scaleX(1.1171);transform-origin:0 0;">123795</div>
<div class="t" style="left:1754.50px;top:1187.77px;font-size:13.5px;color:#2b2b2b;font-weight:bold;-webkit-text-stroke:0;">0</div>
<div class="t" style="left:1766.00px;top:1190.31px;font-size:10.5px;color:#c6c6c6;font-weight:bold;-webkit-text-stroke:0;transform:scaleX(1.0160);transform-origin:0 0;">%</div>
<div class="b" style="left:1780.00px;top:1186.30px;width:80.00px;height:15.70px;background:#f2f2f2"></div>
<div class="t" style="left:2103.45px;top:1187.52px;font-size:13.8px;color:#2b2b2b;font-weight:bold;-webkit-text-stroke:0;">25.31</div>
<div class="t" style="left:2142.00px;top:1190.31px;font-size:10.5px;color:#c6c6c6;font-weight:bold;-webkit-text-stroke:0;transform:scaleX(1.0520);transform-origin:0 0;">MB</div>
<div class="b" style="left:2164.00px;top:1186.30px;width:79.70px;height:15.70px;background:#f2f2f2;border-left:1px solid #c9d3d9"></div>
<div class="b" style="left:331.00px;top:1212.30px;width:1921.00px;height:1.00px;background:#e6e6e6"></div>
<svg class="b" style="left:372.4px;top:1222.3px" width="20" height="12" viewBox="0 0 20 12"><path d="M1 0.7 V8.9 H16.6" fill="none" stroke="#b8b8b8" stroke-width="1.5"/></svg>
<div class="b" style="left:388.1px;top:1228.1px;width:5.8px;height:5.8px;border-radius:50%;background:#b3b3b3"></div>
<div class="t" style="left:399.70px;top:1223.70px;font-size:13px;transform:scaleX(1.1500);transform-origin:0 0;"><span style="color:#2b2b2b;">nginx:</span><span style="color:#2b2b2b;"> </span><span style="color:#c29c2c;">master process /usr/sbin/nginx</span></div>
<div class="t" style="left:1300.30px;top:1223.70px;font-size:13px;color:#2b2b2b;transform:scaleX(1.1171);transform-origin:0 0;">123794</div>
<div class="t" style="left:1435.40px;top:1223.70px;font-size:13px;color:#2b2b2b;transform:scaleX(1.1171);transform-origin:0 0;">123615</div>
<div class="t" style="left:1754.50px;top:1223.77px;font-size:13.5px;color:#2b2b2b;font-weight:bold;-webkit-text-stroke:0;">0</div>
<div class="t" style="left:1766.00px;top:1226.31px;font-size:10.5px;color:#c6c6c6;font-weight:bold;-webkit-text-stroke:0;transform:scaleX(1.0160);transform-origin:0 0;">%</div>
<div class="b" style="left:1780.00px;top:1222.30px;width:80.00px;height:15.70px;background:#f2f2f2"></div>
<div class="t" style="left:2111.15px;top:1223.52px;font-size:13.8px;color:#2b2b2b;font-weight:bold;-webkit-text-stroke:0;">5.12</div>
<div class="t" style="left:2142.00px;top:1226.31px;font-size:10.5px;color:#c6c6c6;font-weight:bold;-webkit-text-stroke:0;transform:scaleX(1.0520);transform-origin:0 0;">MB</div>
<div class="b" style="left:2164.00px;top:1222.30px;width:79.70px;height:15.70px;background:#f2f2f2"></div>
<div class="b" style="left:331.00px;top:1248.30px;width:1921.00px;height:1.00px;background:#e6e6e6"></div>
<svg class="b" style="left:387.4px;top:1258.3px" width="20" height="12" viewBox="0 0 20 12"><path d="M1 0.7 V8.9 H16.3" fill="none" stroke="#b8b8b8" stroke-width="1.5"/></svg>
<div class="b" style="left:402.8px;top:1264.1px;width:5.8px;height:5.8px;border-radius:50%;background:#b3b3b3"></div>
<div class="t" style="left:414.40px;top:1259.70px;font-size:13px;transform:scaleX(1.0992);transform-origin:0 0;"><span style="color:#2b2b2b;">nginx:</span><span style="color:#2b2b2b;"> </span><span style="color:#c29c2c;">worker process</span></div>
<div class="t" style="left:1300.30px;top:1259.70px;font-size:13px;color:#2b2b2b;transform:scaleX(1.1171);transform-origin:0 0;">123796</div>
<div class="t" style="left:1435.40px;top:1259.70px;font-size:13px;color:#2b2b2b;transform:scaleX(1.1171);transform-origin:0 0;">123794</div>
<div class="t" style="left:1754.50px;top:1259.77px;font-size:13.5px;color:#2b2b2b;font-weight:bold;-webkit-text-stroke:0;">0</div>
<div class="t" style="left:1766.00px;top:1262.31px;font-size:10.5px;color:#c6c6c6;font-weight:bold;-webkit-text-stroke:0;transform:scaleX(1.0160);transform-origin:0 0;">%</div>
<div class="b" style="left:1780.00px;top:1258.30px;width:80.00px;height:15.70px;background:#f2f2f2"></div>
<div class="t" style="left:2111.15px;top:1259.52px;font-size:13.8px;color:#2b2b2b;font-weight:bold;-webkit-text-stroke:0;">3.47</div>
<div class="t" style="left:2142.00px;top:1262.31px;font-size:10.5px;color:#c6c6c6;font-weight:bold;-webkit-text-stroke:0;transform:scaleX(1.0520);transform-origin:0 0;">MB</div>
<div class="b" style="left:2164.00px;top:1258.30px;width:79.70px;height:15.70px;background:#f2f2f2"></div>
<div class="b" style="left:304.00px;top:1308.30px;width:2034.00px;height:1.00px;background:#e3e3e3"></div>
</body></html>
